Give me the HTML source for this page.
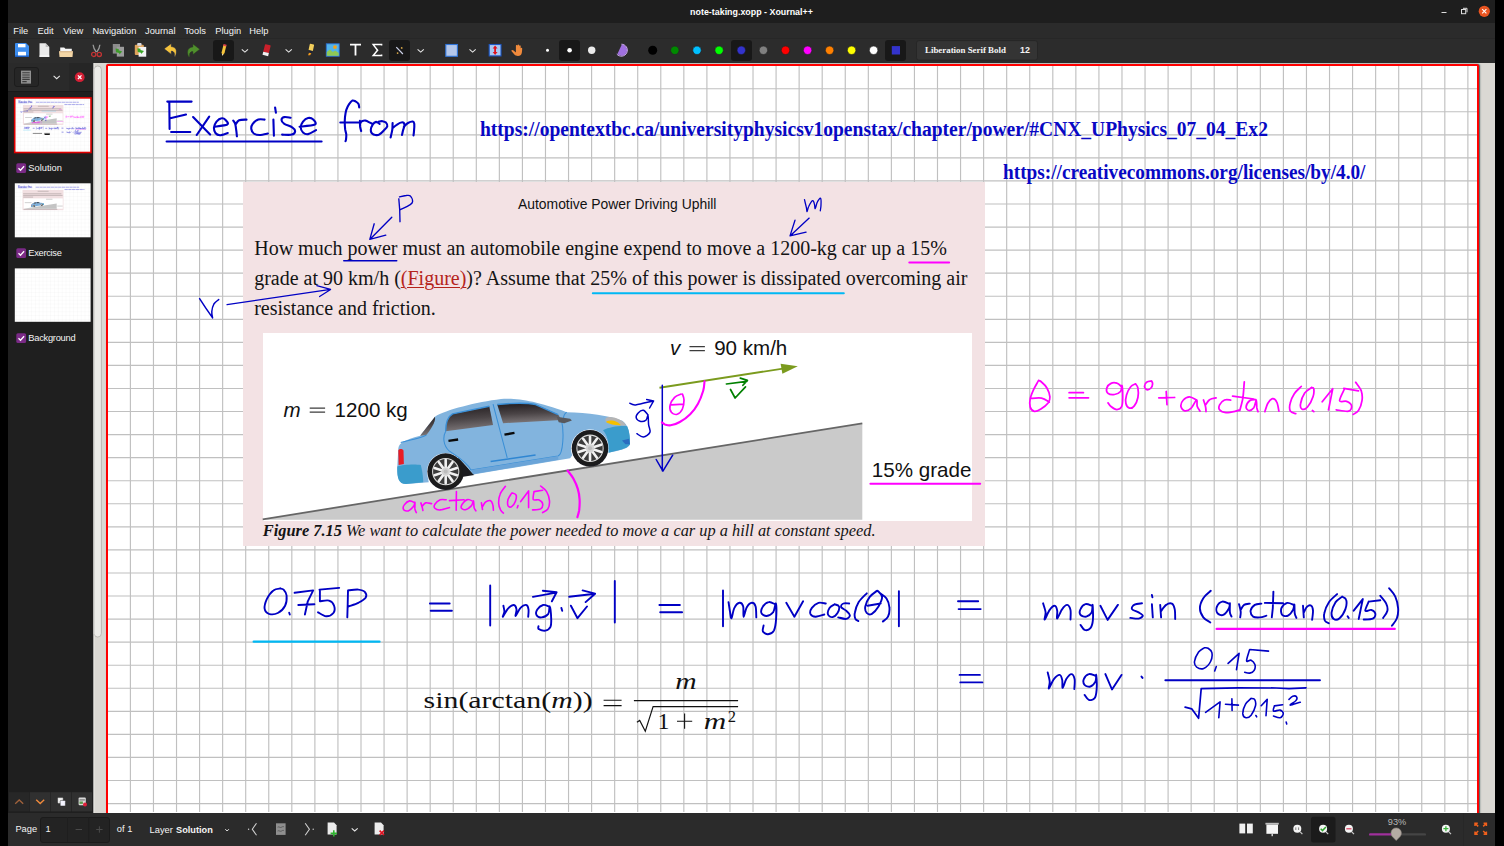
<!DOCTYPE html>
<html><head><meta charset="utf-8"><title>note-taking.xopp - Xournal++</title>
<style>
*{box-sizing:border-box;margin:0;padding:0}
html,body{width:1504px;height:846px;overflow:hidden;background:#000;font-family:"Liberation Sans",sans-serif;position:relative}
.abs{position:absolute}
#title{position:absolute;left:8px;top:0;width:1487px;height:23px;background:#1e1e1e;color:#fff;font-weight:bold;font-size:8.900px;text-align:center;line-height:24px;overflow:hidden}
#menu{position:absolute;left:8px;top:23px;width:1487px;height:15px;background:#2b2b2b;color:#f4f4f4;font-size:9.3px}
#menu span{position:absolute;top:0.700px;line-height:15px;white-space:nowrap}
#tool{position:absolute;left:8px;top:38px;width:1487px;height:25px;background:#2c2c2c;border-top:1px solid #272727}
.ic{position:absolute;overflow:visible}
.sel{position:absolute;background:#181818;border-radius:3px}
#side{position:absolute;left:8px;top:63px;width:85px;height:750px;background:#1f1f1f}
#scr{position:absolute;left:93px;top:63px;width:1402px;height:750px;background:#dad8d3}
#rstrip{position:absolute;left:1479px;top:63px;width:16px;height:749px;background:#d9d7d2}
#bot{position:absolute;left:8px;top:813px;width:1487px;height:33px;background:#2b2b2b}
#page{position:absolute;left:106px;top:64px;width:1373px;height:760px;border:2px solid #f00;background:#fff;border-radius:2px 2px 0 0;box-shadow:1px 0 1.5px rgba(10,50,50,0.75)}
.lbl{position:absolute;color:#f4f4f4;font-size:9.3px;white-space:nowrap}
.url{font-family:"Liberation Serif",serif;font-weight:bold;font-size:20.600px;line-height:22px;color:#0808c4;white-space:nowrap;transform-origin:0 0}
.para{font-family:"Liberation Serif",serif;font-size:20px;line-height:24px;color:#141414;white-space:nowrap}
.cap{font-family:"Liberation Serif",serif;font-style:italic;font-size:16.370px;line-height:20px;color:#141414;white-space:nowrap}
.figl{font-size:20.550px;line-height:24px;color:#111;white-space:nowrap}
.tink path{stroke-width:6.500px;stroke-opacity:0.62}

</style></head><body>
<div id="title">note-taking.xopp - Xournal++</div>
<div id="menu">
<span style="left:5.3px">File</span><span style="left:29.6px">Edit</span><span style="left:55.2px">View</span><span style="left:84.4px">Navigation</span><span style="left:137px">Journal</span><span style="left:176.2px">Tools</span><span style="left:207.3px">Plugin</span><span style="left:241.3px">Help</span>
</div>
<div id="tool"></div>
<!-- window controls -->
<svg class="abs" style="left:1430px;top:0" width="66" height="23" viewBox="0 0 66 23">
<rect x="11.5" y="12" width="5" height="1" fill="#ddd"/>
<rect x="31.5" y="9.5" width="4.2" height="4.2" fill="none" stroke="#ddd" stroke-width="1"/><path d="M33 8.3h4v4" fill="none" stroke="#ddd" stroke-width="1"/>
<circle cx="54.3" cy="11.3" r="5.6" fill="#e95420"/><path d="M52.2 9.2l4.2 4.2M56.4 9.2l-4.2 4.2" stroke="#fff" stroke-width="1.1"/>
</svg>
<!-- toolbar selected backgrounds -->
<div class="sel" style="left:213px;top:40px;width:21px;height:21px"></div>
<div class="sel" style="left:389px;top:40px;width:21px;height:21px"></div>
<div class="sel" style="left:559px;top:40px;width:21px;height:21px"></div>
<div class="sel" style="left:731px;top:40px;width:21px;height:21px"></div>
<div class="sel" style="left:885px;top:40px;width:21px;height:21px"></div>
<svg class="abs" style="left:0;top:36px" width="1504" height="30" viewBox="0 36 1504 30">
<!-- save -->
<g transform="translate(15,43)"><path d="M1 0h10l3 3v10a1 1 0 0 1-1 1H1a1 1 0 0 1-1-1V1a1 1 0 0 1 1-1z" fill="#3d8ef0"/><rect x="0" y="12.5" width="14" height="1.5" fill="#1d5fc2"/><rect x="3" y="1" width="7.5" height="3.3" fill="#fff"/><rect x="3" y="8.8" width="8" height="3.6" fill="#fff"/></g>
<!-- new -->
<g transform="translate(39,43)"><path d="M0.5 0.3h6.2l3.6 3.6v9.8h-9.8z" fill="#e9e9e9"/><path d="M6.7 0.3l3.6 3.6h-3.6z" fill="#bdbdbd"/><rect x="0.5" y="12.6" width="9.8" height="1.2" fill="#fff"/></g>
<!-- open -->
<g transform="translate(59,46.5)"><path d="M1.2 1h4l1.2 1.2h6.4v3h-11.6z" fill="#f6f6f6"/><path d="M0 4.8h14l-0.5 5.7h-13z" fill="#f3d6a6"/><path d="M0 4.8h14v1h-14z" fill="#d7b58a"/></g>
<!-- cut -->
<g transform="translate(90.5,44)"><path d="M2.6 0.8c0.3 3 1.6 5.5 3.2 7.4M9.4 0.8c-0.3 3-1.6 5.5-3.2 7.4" stroke="#9a9a9a" stroke-width="1.3" fill="none"/><circle cx="3.2" cy="10.4" r="2.1" fill="none" stroke="#c33434" stroke-width="1.3"/><circle cx="8.8" cy="10.4" r="2.1" fill="none" stroke="#c33434" stroke-width="1.3"/></g>
<!-- copy -->
<g transform="translate(112,43)"><rect x="0.8" y="1" width="7.2" height="9.6" fill="#8c8c8c"/><rect x="4.8" y="3.8" width="7.2" height="9.8" fill="#9d9d9d"/><path d="M3.6 5.6l3.2 0.4-0.2 1.2 3.6 1.2-2.8 3-0.2-1.4-3.2-0.8z" fill="#3d9a28"/></g>
<!-- paste -->
<g transform="translate(134,42.5)"><rect x="0.8" y="2.2" width="9" height="10.4" rx="1" fill="#dfa45c"/><rect x="3.2" y="0.6" width="4.4" height="2.6" rx="0.8" fill="#d8d8e0"/><rect x="4.6" y="4.4" width="7.6" height="9.8" fill="#f3f3f6"/><path d="M3.4 5.8l3.2 0.4-0.2 1.2 3.6 1.2-2.8 3-0.2-1.4-3.2-0.8z" fill="#3aa526"/></g>
<!-- undo -->
<g transform="translate(163.5,43)"><path d="M7.8 0.4v3.2c4.2 0.2 6.6 3.4 4.2 9.6l-1.3 0.6c0.8-3.6-0.2-5.6-2.9-5.6v3.2l-7.3-5.6z" fill="#f5c33c" stroke="#1a2240" stroke-width="0.6"/></g>
<!-- redo -->
<g transform="translate(185.5,43)"><path d="M7.4 1v3c-4.2 0.2-6.8 3.4-4.4 9.4l1.3 0.4c-0.8-3.4 0.4-5.2 3.1-5.2v3l6.9-5.4z" fill="#4f8f2c" stroke="#2b3a22" stroke-width="0.5"/></g>
<!-- pen -->
<g transform="translate(223.6,50.5) rotate(14)"><path d="M-1.5 -5.5h3v7.6l-1.5 3.2-1.5-3.2z" fill="#f5c33c"/><path d="M-1.5 -6.2h3v1.8h-3z" fill="#e0404a"/><path d="M-0.7 3.8l0.7 1.5 0.7-1.5z" fill="#e9e1d4"/></g>
<!-- chevrons -->
<g fill="none" stroke="#e6e6e6" stroke-width="1.1"><path d="M241.8 49.3l3.1 2.8 3.1-2.8"/><path d="M285.6 49.3l3.1 2.8 3.1-2.8"/><path d="M417.6 49.3l3.1 2.8 3.1-2.8"/><path d="M469.5 49.3l3.1 2.8 3.1-2.8"/></g>
<!-- eraser -->
<g transform="translate(266.6,50.2) rotate(14)"><rect x="-2.9" y="-5.6" width="5.8" height="8" rx="0.6" fill="#c9202b"/><rect x="-2.9" y="2.2" width="5.8" height="3.2" fill="#f1f1f1"/></g>
<!-- highlighter -->
<g transform="translate(310.8,50) rotate(12)"><rect x="-2.2" y="-6" width="4.4" height="6.6" rx="0.6" fill="#f3cf5b"/><path d="M-1.8 0.6h3.6l-0.6 2.4h-2.4z" fill="#1c2238"/><path d="M-1.2 3l-0.4 2.8 2-0.6 0.8-2.2z" fill="#f29a1c"/></g>
<!-- image -->
<g transform="translate(326,43.5)"><rect x="0.3" y="0.3" width="12.9" height="12.4" fill="#52b4ec" stroke="#2b6fd0" stroke-width="0.9"/><path d="M0.8 12.2v-3.6l3.2-2.6 2.8 2.6 2.4-1.6 3.5 2.4v2.8z" fill="#8fc956"/><circle cx="9" cy="3.6" r="1.9" fill="#f5a21b"/></g>
<!-- T -->
<path d="M350 44.6h11M355.5 44.6v11" stroke="#fff" stroke-width="1.8" fill="none"/>
<!-- sigma -->
<path d="M381.6 45.6v-1h-8.4l4.4 5.6-4.4 5.4h8.4v-1" stroke="#fff" stroke-width="1.5" fill="none" stroke-linejoin="miter"/>
<!-- stroke type -->
<path d="M396.3 47.2l6.6 6.8" stroke="#cfd3ea" stroke-width="1.2" fill="none"/><circle cx="401.7" cy="47.9" r="0.9" fill="#d8a748"/><circle cx="397.6" cy="53.1" r="0.9" fill="#d8a748"/>
<!-- blue rect -->
<rect x="445.8" y="44.5" width="11.6" height="11.8" fill="#b4c7ea" stroke="#2f74d8" stroke-width="1.1"/>
<!-- vertical space -->
<rect x="489.2" y="44.5" width="11.8" height="11.4" fill="#a9c8f2" stroke="#1d57c4" stroke-width="1.1"/><path d="M495.1 45.4l2.4 3h-1.5v3.6h1.5l-2.4 3-2.4-3h1.5v-3.6h-1.5z" fill="#e0121c"/>
<!-- hand -->
<path d="M513.6 50.6c-1-1-2.6-0.6-2 0.6l3 3.6c1 1.2 4.6 1.6 6.2 0.2 1.2-1 1.2-3 1.4-6.4 0-1-1.4-1-1.5 0v-2.4c0-1.2-1.5-1.2-1.6 0v-0.8c0-1.2-1.6-1.2-1.6 0v0.4c0-1.2-1.6-1.2-1.6 0.2v6.400z" fill="#f08a3c"/>
<!-- dots -->
<circle cx="547.5" cy="50.3" r="1.5" fill="#fff"/><circle cx="569.6" cy="50.3" r="2.3" fill="#fff"/><circle cx="591.7" cy="50.3" r="3.7" fill="#ececec"/>
<!-- fill icon -->
<path d="M621.8 44.6a5.6 5.6 0 1 1-4.4 9.400z" fill="#a070e0"/><path d="M621.4 44.2a6 6 0 1 1-4.6 9.9" fill="none" stroke="#d9b6ff" stroke-width="0.9"/>
<!-- colours -->
<circle cx="652.7" cy="50.3" r="4.5" fill="#000"/><circle cx="674.8" cy="50.3" r="4.2" fill="#008a00" stroke="#2a1a2a" stroke-width="0.6"/><circle cx="697" cy="50.3" r="4.2" fill="#00c0ff" stroke="#2a1a1a" stroke-width="0.6"/><circle cx="719.1" cy="50.3" r="4.2" fill="#00ff00" stroke="#2a1a2a" stroke-width="0.6"/><circle cx="741.3" cy="50.3" r="4.2" fill="#3333cc" stroke="#1a1a2a" stroke-width="0.6"/><circle cx="763.4" cy="50.3" r="4.2" fill="#808080" stroke="#222" stroke-width="0.6"/><circle cx="785.5" cy="50.3" r="4.2" fill="#ff0000" stroke="#222" stroke-width="0.6"/><circle cx="807.6" cy="50.3" r="4.2" fill="#ff00ff" stroke="#222" stroke-width="0.6"/><circle cx="829.6" cy="50.3" r="4.2" fill="#ff8000" stroke="#222" stroke-width="0.6"/><circle cx="851.6" cy="50.3" r="4.2" fill="#ffff00" stroke="#222" stroke-width="0.6"/><circle cx="873.6" cy="50.3" r="4.2" fill="#ffffff" stroke="#222" stroke-width="0.6"/>
<rect x="891.8" y="46.1" width="8.2" height="8.4" fill="#3333cc"/>
<!-- font button -->
<rect x="916.5" y="40.6" width="121" height="19.6" rx="2.5" fill="#343434" stroke="#262626" stroke-width="1"/>
</svg>
<div class="abs" style="left:925px;top:44px;font-family:'Liberation Serif',serif;font-weight:bold;font-size:8.900px;color:#f4f4f4;line-height:12px;white-space:nowrap">Liberation Serif Bold</div>
<div class="abs" style="left:1020px;top:44px;font-weight:bold;font-size:8.900px;color:#f4f4f4;line-height:12px">12</div>

<div id="scr"></div>
<div id="side"></div>
<div class="abs" style="left:8px;top:63px;width:61px;height:28px;background:#2a2a2a"></div>
<div class="abs" style="left:69px;top:63px;width:24px;height:28px;background:#262626"></div>
<div class="abs" style="left:8px;top:91px;width:85px;height:1px;background:#191919"></div>
<div class="abs" style="left:92.5px;top:63px;width:1px;height:750px;background:#0c0c0c"></div>
<div class="abs" style="left:13.5px;top:67px;width:25px;height:20px;background:#262626;border:1px solid #1c1c1c;border-radius:3px"></div>
<svg class="abs" style="left:0;top:63px" width="106" height="750" viewBox="0 63 106 750">
<rect x="21" y="70.6" width="10" height="13" fill="#909090"/>
<g stroke="#3c3c3c" stroke-width="1.100"><path d="M22.300 72.800h7.400M22.300 75h7.400M22.300 77.200h7.400M22.300 79.400h7.400M22.300 81.600h4.400"/></g>
<path d="M53.6 75.9l3.1 2.8 3.1-2.8" fill="none" stroke="#e6e6e6" stroke-width="1.1"/>
<circle cx="79.7" cy="77.2" r="4.9" fill="#d51f35"/><path d="M77.9 75.4l3.6 3.6M81.500 75.4l-3.600 3.6" stroke="#fff" stroke-width="1.2"/>
<!-- scroll thumb -->
<path d="M94.2 812V69.6a3.600 3.600 0 0 1 7.200 0V812" fill="none"/>
<rect x="94.100" y="66" width="7.300" height="571" rx="3.600" fill="#ecebe8" stroke="#a9a8a3" stroke-width="0.7"/>
<rect x="93.300" y="63" width="1" height="750" fill="#f1f0ed"/>
<!-- layer thumbs -->
<rect x="14.700" y="97.900" width="76.300" height="54.600" fill="#fff" stroke="#e00000" stroke-width="1.600"/>
<rect x="14.800" y="183.300" width="75.800" height="54" fill="#fff"/>
<rect x="14.800" y="268.400" width="75.800" height="53.400" fill="#fff"/>
<!-- checkboxes -->
<g id="cb"><rect x="16.300" y="163.200" width="9.800" height="9.800" rx="1.600" fill="#7a2a86"/><path d="M18.500 168.200l2 2 3.600-4" fill="none" stroke="#fff" stroke-width="1.300"/></g>
<use href="#cb" y="85"/><use href="#cb" y="170"/>
<!-- bottom buttons -->
<rect x="8.800" y="792.200" width="20.800" height="19.200" fill="#272727"/><rect x="30" y="792.200" width="20.400" height="19.200" fill="#303030"/><rect x="50.800" y="792.200" width="20.400" height="19.200" fill="#303030"/><rect x="71.700" y="792.200" width="20.400" height="19.200" fill="#303030"/>
<path d="M15.200 803.800l4-3.800 4 3.800" fill="none" stroke="#a0623c" stroke-width="1.300"/>
<path d="M36.200 799.800l4 3.800 4-3.800" fill="none" stroke="#f08a3c" stroke-width="1.400"/>
<rect x="57.600" y="797.600" width="5.600" height="5.800" rx="0.800" fill="#f4f4f4" stroke="#2a2a2a" stroke-width="0.500"/><rect x="60.200" y="800.400" width="5.200" height="5.600" rx="0.800" fill="#f4f4ff" stroke="#2a2a2a" stroke-width="0.500"/>
<rect x="78.600" y="797.600" width="7.200" height="7.600" rx="1" fill="#d9d9d9"/><rect x="79.500" y="799.300" width="5.400" height="1.200" fill="#777"/><rect x="79.500" y="801.500" width="3.400" height="2.400" fill="#5a9a4a"/><circle cx="85" cy="804.600" r="2" fill="#e0203a"/>
</svg>
<div class="lbl" style="left:28.300px;top:162px;line-height:12px">Solution</div>
<div class="lbl" style="left:28.300px;top:247px;line-height:12px;letter-spacing:-0.300px">Exercise</div>
<div class="lbl" style="left:28.300px;top:332px;line-height:12px;letter-spacing:-0.260px">Background</div>
<svg class="abs" style="left:0;top:90px" width="100" height="240" viewBox="0 90 100 240"><defs><clipPath id="t1"><rect x="15.5" y="98.7" width="74.7" height="53"/></clipPath><clipPath id="t2"><rect x="14.800" y="183.300" width="75.800" height="54"/></clipPath><clipPath id="t3"><rect x="14.800" y="268.400" width="75.800" height="53.400"/></clipPath></defs><g clip-path="url(#t1)"><g transform="translate(15.50,98.70) scale(0.05450) translate(-107,-65)"><path d="M130.4 66V1035M199.6 66V1035M268.8 66V1035M337.9 66V1035M407.1 66V1035M476.3 66V1035M545.5 66V1035M614.7 66V1035M683.8 66V1035M753.0 66V1035M822.2 66V1035M891.4 66V1035M960.6 66V1035M1029.7 66V1035M1098.9 66V1035M1168.1 66V1035M1237.3 66V1035M1306.5 66V1035M1375.6 66V1035M1444.8 66V1035M108 88.7H1477M108 157.9H1477M108 227.1H1477M108 296.2H1477M108 365.4H1477M108 434.6H1477M108 503.8H1477M108 573.0H1477M108 642.1H1477M108 711.3H1477M108 780.5H1477M108 849.7H1477M108 918.9H1477M108 988.0H1477" stroke="#000" stroke-opacity="0.028" stroke-width="14" fill="none"/><rect x="243" y="181.5" width="742" height="364.5" fill="#f1dfe1"/><rect x="262.6" y="332.7" width="709.3" height="188" fill="#fff"/><path d="M262.7 519.700L862.3 423.400V519.700z" fill="#c4c4c4"/><use href="#car"/><g stroke="#222" stroke-opacity="0.55" stroke-width="7"><path d="M255 249h692M255 279h714M255 309h180M518 204h198M263 532h610" /></g><g stroke="#111" stroke-opacity="0.5" stroke-width="7"><path d="M284 410h122M670 349h116M872 472h98"/></g><g stroke="#0000c4" stroke-opacity="0.75" stroke-width="8"><path d="M481 130h788M1004 173h362" stroke-dasharray="60 8"/></g><g class="tink" fill="none" stroke-linecap="round"><path stroke="#0000c4" stroke-width="2.10" d="M167.3 101.6L191.6 101.6M169.3 102.2L169.6 129.0M170.2 118.3L186.0 114.6M171.1 132.0L190.3 132.0M193.1 117.1L210.1 134.6M209.2 116.6L196.7 135.0M214.3 126.7C216.4 126.4 225.4 125.6 227.3 124.5C229.1 123.3 226.5 121.0 225.6 120.0C224.6 118.9 223.1 118.0 221.6 118.3C220.1 118.5 217.8 120.1 216.5 121.6C215.3 123.2 214.2 125.4 214.0 127.3C213.8 129.2 214.4 131.6 215.4 133.0C216.4 134.3 217.8 135.2 219.9 135.2C222.0 135.2 226.5 133.3 227.8 133.0M233.2 120.5C233.6 121.1 234.7 122.2 235.2 123.9C235.7 125.6 236.0 128.6 236.3 130.7C236.6 132.8 236.8 135.4 236.9 136.3M235.5 124.5C236.1 123.8 237.3 121.1 239.1 120.3C241.0 119.5 245.2 119.7 246.5 119.6M264.6 119.6C263.5 119.6 260.3 118.9 258.3 119.6C256.4 120.3 253.9 122.3 252.7 123.9C251.5 125.5 251.1 127.4 251.3 129.0C251.5 130.6 252.5 132.5 253.8 133.5C255.2 134.5 257.1 135.0 259.5 135.0C261.8 135.0 266.5 133.8 267.9 133.5M273.4 119.6L273.9 135.8M275.1 107.5L275.9 112.6M290.6 117.7C289.5 117.6 285.8 116.8 284.3 117.1C282.8 117.5 281.5 118.8 281.5 120.0C281.5 121.1 282.5 122.7 284.3 123.9C286.1 125.1 290.5 126.1 292.2 127.3C294.0 128.5 295.2 130.0 295.1 131.3C295.0 132.5 293.8 134.1 291.7 134.6C289.5 135.2 283.7 134.6 282.1 134.6M299.6 126.7C302.1 126.4 312.6 125.7 314.9 124.5C317.1 123.3 314.3 120.5 313.2 119.4C312.0 118.3 309.8 117.7 308.1 118.0C306.4 118.4 304.2 120.1 303.0 121.6C301.8 123.2 300.7 125.5 300.7 127.3C300.7 129.1 301.8 131.3 303.0 132.4C304.2 133.5 305.9 134.5 308.1 134.1C310.2 133.7 314.7 130.8 316.0 130.1M166.6 141.5L321.6 141.5"/>
<path stroke="#0000c4" stroke-width="2.10" d="M359.2 107.4C359.1 106.8 359.0 104.8 358.4 103.8C357.8 102.8 356.5 101.9 355.5 101.3C354.5 100.8 353.4 100.2 352.3 100.6C351.3 101.1 350.2 102.6 349.1 104.2C348.1 105.7 347.0 107.7 346.3 109.9C345.6 112.0 345.3 114.6 345.0 117.0C344.8 119.3 344.7 121.9 344.8 124.0C344.8 126.2 345.0 127.9 345.2 129.7C345.5 131.5 346.2 133.0 346.3 134.7C346.4 136.3 346.1 138.6 346.0 139.6C345.8 140.7 345.5 140.9 345.5 141.2M340.3 122.5L358.4 122.5M359.9 120.9C360.0 121.9 359.9 125.2 360.1 126.9C360.4 128.6 361.0 130.4 361.2 131.1M360.1 123.3C360.4 123.0 361.0 121.7 361.9 121.2C362.8 120.8 364.2 120.4 365.5 120.6C366.8 120.9 368.5 121.9 369.7 122.5C370.9 123.0 372.1 123.7 372.6 123.9M379.6 123.9C379.1 123.6 377.3 121.8 376.1 121.9C374.9 122.1 373.4 123.5 372.6 124.8C371.7 126.1 370.9 128.3 370.8 129.7C370.7 131.1 371.1 132.4 371.8 133.3C372.6 134.1 374.1 134.9 375.4 135.0C376.7 135.2 378.2 135.1 379.6 134.3C381.1 133.6 382.6 131.8 383.9 130.4C385.2 129.1 387.0 127.5 387.3 126.2C387.7 124.9 386.8 123.5 386.0 122.6C385.2 121.8 383.7 121.4 382.5 121.2C381.3 121.0 379.5 121.5 378.9 121.6M392.6 123.0C392.5 124.1 392.6 127.3 392.3 129.7C392.0 132.1 390.9 136.2 390.6 137.5M392.4 128.3C393.1 127.7 395.0 125.8 396.7 124.8C398.3 123.7 401.0 122.3 402.3 122.3C403.6 122.3 404.3 123.4 404.5 124.8C404.6 126.1 403.5 128.7 403.0 130.4C402.6 132.1 402.2 134.3 402.0 135.0M403.8 126.9C404.5 126.2 406.5 123.9 408.0 123.0C409.6 122.1 411.9 121.4 413.0 121.6C414.0 121.7 414.1 122.4 414.3 124.0C414.4 125.6 414.2 129.2 414.0 131.1C413.9 133.0 413.6 134.7 413.5 135.4"/></g><g class="tink" fill="none" stroke-linecap="round"><path stroke="#0000c4" stroke-width="1.35" d="M398.8 198.8L399.7 209.6L400.0 221.7M399.5 196.9C400.6 196.6 404.4 195.6 406.2 195.5C408.0 195.3 409.3 194.9 410.4 195.9C411.5 196.9 412.7 200.1 412.6 201.6C412.5 203.1 412.0 203.6 409.9 204.9C407.9 206.2 402.1 208.8 400.5 209.6M391.8 217.2L369.8 239.4M374.2 223.8L369.8 239.4L385.8 235.1"/>
<path stroke="#0000c4" stroke-width="1.60" d="M343.8 260.7L396.7 260.7"/>
<path stroke="#0000c4" stroke-width="1.30" d="M804.5 199.7C804.8 201.0 806.0 205.8 806.4 207.7C806.8 209.7 806.7 211.8 807.1 211.5C807.4 211.3 807.8 208.1 808.8 206.3C809.7 204.5 811.6 201.0 812.5 200.7C813.5 200.3 814.0 202.6 814.4 204.0C814.9 205.3 814.7 209.0 815.2 208.7C815.7 208.4 816.4 203.8 817.3 202.1C818.2 200.3 819.9 197.8 820.6 198.3C821.2 198.8 821.1 202.8 821.0 204.9C821.0 207.0 820.4 209.8 820.3 210.8M809.2 218.1L790.0 235.9M795.0 220.2L790.0 235.9L806.1 232.1"/>
<path stroke="#0000c4" stroke-width="1.50" d="M199.6 298.7L206.0 308.3L212.6 317.9M212.6 317.9C212.4 316.8 211.6 313.8 211.8 311.5C212.0 309.2 212.8 306.0 213.9 304.0C215.1 302.1 217.9 300.3 218.7 299.6"/>
<path stroke="#0000c4" stroke-width="1.20" d="M227.0 304.7L330.6 289.4M316.8 285.7L330.6 289.4L319.6 296.6"/>
<path stroke="#ff00ff" stroke-width="2.00" d="M909.3 262.6L949.1 262.6"/>
<path stroke="#00b8f4" stroke-width="2.00" d="M592.8 293.2L843.8 293.2"/>
<path stroke="#ff00ff" stroke-width="2.00" d="M870.4 483.8L980.2 483.8"/>
<path stroke="#0000c4" stroke-width="1.50" d="M662.3 385.3L662.3 470.8M656.2 459.5L662.9 471.2L672.7 455.2M629.8 403.2C630.7 403.4 631.8 405.2 635.6 404.9C639.4 404.5 649.7 401.8 652.5 401.2M646.7 399.6L653.6 400.9L649.6 408.0M648.0 414.9C647.2 414.1 645.0 410.6 643.4 410.3C641.8 410.0 639.4 411.6 638.2 412.9C637.0 414.2 635.8 416.7 636.3 418.1C636.7 419.5 639.2 421.0 640.8 421.4C642.4 421.7 644.8 421.0 646.0 420.1C647.2 419.1 647.5 414.8 648.0 415.5C648.4 416.3 648.3 421.8 648.6 424.6C648.9 427.4 650.8 430.4 649.9 432.4C649.0 434.5 645.6 436.8 643.4 437.0C641.2 437.2 638.0 434.3 636.9 433.7"/>
<path stroke="#ff00ff" stroke-width="1.70" d="M681.1 394.1C680.0 394.6 676.5 395.5 674.6 397.3C672.8 399.2 670.6 402.6 670.1 405.1C669.5 407.6 670.2 410.7 671.4 412.3C672.6 413.8 675.4 414.8 677.2 414.2C679.1 413.7 681.3 411.4 682.4 409.0C683.5 406.6 684.0 402.4 684.0 399.9C684.0 397.4 682.7 395.0 682.4 394.1M671.4 404.9L683.7 404.1"/>
<path stroke="#ff00ff" stroke-width="2.10" d="M704.5 381.4C704.3 383.0 704.3 387.1 703.2 390.8C702.1 394.5 700.2 399.9 698.0 403.8C695.9 407.7 693.3 411.2 690.2 414.2C687.2 417.2 683.1 420.2 679.8 422.0C676.6 423.9 673.2 424.9 670.7 425.3C668.2 425.7 666.3 424.8 664.9 424.4C663.4 423.9 662.4 422.7 661.9 422.4"/>
<path stroke="#008000" stroke-width="1.70" d="M726.4 384.0L746.8 381.4M740.3 378.1L747.4 380.4L742.9 385.3M730.5 389.5L735.1 398.0L745.5 386.9"/>
<path stroke="#ff00ff" stroke-width="1.60" d="M414.9 502.9C414.1 502.6 411.4 500.6 409.6 500.9C407.9 501.2 405.3 503.5 404.3 504.9C403.3 506.3 403.0 508.6 403.6 509.5C404.3 510.5 406.6 511.4 408.3 510.9C410.0 510.3 412.5 507.7 413.6 506.2C414.7 504.8 414.7 501.8 414.9 502.2C415.2 502.7 414.7 507.2 414.9 508.9C415.2 510.6 416.1 512.0 416.3 512.6M420.9 502.9C421.2 503.7 421.9 506.3 422.3 507.6C422.6 508.8 422.8 510.0 422.9 510.5M422.3 506.2C422.8 505.7 424.0 503.3 425.6 502.9C427.1 502.5 430.6 503.5 431.6 503.6M446.2 499.8C445.2 499.8 442.1 499.1 440.2 499.8C438.3 500.6 435.8 502.8 434.9 504.2C434.0 505.6 434.0 507.3 434.9 508.2C435.8 509.2 437.8 510.1 440.2 509.9C442.7 509.8 448.0 508.0 449.5 507.6M456.4 491.6L456.2 510.2M449.5 500.6L464.1 499.8M473.5 501.6C472.5 501.2 469.4 499.1 467.5 499.6C465.6 500.0 463.2 502.8 462.2 504.2C461.2 505.7 460.8 507.3 461.5 508.2C462.2 509.1 464.5 510.0 466.1 509.5C467.8 509.1 470.2 507.0 471.5 505.6C472.7 504.1 473.0 500.6 473.5 500.9C473.9 501.2 473.7 505.9 474.1 507.6C474.5 509.2 475.6 510.3 475.9 510.9M481.4 502.9L482.5 509.5M482.1 507.6C482.7 506.7 484.1 503.4 485.4 502.2C486.8 501.1 488.9 500.3 490.1 500.6C491.3 501.0 492.2 502.6 492.7 504.2C493.3 505.8 493.3 509.2 493.4 510.2M505.4 486.3C504.5 487.6 501.2 491.4 500.1 494.3C498.9 497.1 498.6 500.9 498.7 503.6C498.8 506.2 499.9 508.6 500.7 510.2C501.5 511.8 502.9 512.7 503.4 513.1M511.4 493.6C510.8 494.6 508.6 497.6 508.0 499.6C507.5 501.6 507.5 504.3 508.0 505.6C508.6 506.8 510.1 507.6 511.4 506.9C512.6 506.2 514.6 503.6 515.3 501.6C516.1 499.6 516.6 496.4 516.0 494.9C515.5 493.5 512.7 493.3 512.0 492.9M518.0 505.6L517.3 507.8M520.7 501.6L528.6 490.9L528.6 507.6M534.0 491.6L542.6 490.3M534.0 491.6C533.9 492.9 532.5 498.2 533.3 499.6C534.1 500.9 537.1 499.2 538.6 499.8C540.2 500.5 542.3 502.1 542.6 503.6C542.9 505.1 542.3 507.8 540.6 508.9C538.9 509.9 534.0 509.8 532.6 509.9M540.6 486.0C541.6 486.9 545.1 489.1 546.6 491.6C548.1 494.1 549.3 498.0 549.5 500.9C549.7 503.8 549.1 506.9 547.9 508.9C546.8 510.8 543.5 512.0 542.6 512.6"/>
<path stroke="#ff00ff" stroke-width="2.20" d="M567.6 470.6C568.5 471.9 571.5 475.2 573.2 478.3C574.9 481.4 576.8 485.4 577.8 488.9C578.9 492.5 579.4 496.0 579.6 499.6C579.8 503.1 579.5 507.3 579.2 510.2C578.8 513.1 577.7 516.0 577.4 517.1"/>
<path stroke="#ff00ff" stroke-width="1.75" d="M1038.5 380.5C1037.8 382.0 1035.2 386.1 1033.8 389.1C1032.4 392.2 1030.8 395.7 1030.2 398.7C1029.6 401.7 1029.5 405.0 1030.2 407.1C1030.9 409.2 1032.6 411.0 1034.4 411.3C1036.2 411.6 1038.6 410.3 1040.9 408.9C1043.2 407.5 1046.6 404.9 1048.1 402.9C1049.6 400.9 1050.1 399.4 1049.9 396.9C1049.7 394.4 1048.3 390.4 1046.9 388.0C1045.5 385.5 1042.9 383.2 1041.5 382.0C1040.1 380.7 1039.0 380.8 1038.5 380.5M1030.2 398.5C1032.1 398.4 1038.4 397.5 1041.5 398.1C1044.7 398.7 1048.0 401.4 1049.3 402.1M1069.1 392.7L1083.4 392.7M1069.1 397.8L1088.5 397.8M1121.7 386.8C1120.9 386.2 1118.7 383.7 1116.9 383.2C1115.1 382.6 1112.6 382.6 1111.0 383.4C1109.3 384.2 1107.3 386.3 1106.8 388.0C1106.3 389.6 1106.7 392.2 1108.0 393.3C1109.3 394.4 1112.4 394.8 1114.5 394.5C1116.6 394.2 1119.3 393.0 1120.5 391.5C1121.8 390.0 1121.6 384.6 1122.0 385.6C1122.3 386.6 1122.7 394.0 1122.7 397.5C1122.6 401.0 1122.7 404.5 1121.7 406.5C1120.8 408.5 1118.7 409.5 1116.9 409.5C1115.1 409.5 1112.4 407.6 1111.0 406.5C1109.5 405.4 1108.5 403.5 1108.0 402.9M1135.5 383.8C1134.7 384.3 1132.2 384.9 1130.7 386.8C1129.2 388.6 1127.3 392.3 1126.5 395.1C1125.7 397.9 1125.4 401.4 1125.9 403.5C1126.4 405.7 1128.1 407.7 1129.5 408.1C1130.9 408.5 1132.9 407.7 1134.3 405.9C1135.7 404.1 1137.3 400.5 1137.9 397.5C1138.5 394.5 1138.3 390.2 1137.9 388.0C1137.5 385.7 1135.9 384.5 1135.5 383.8M1151.6 381.0C1150.8 381.2 1148.1 381.1 1146.9 382.0C1145.7 382.8 1144.5 384.9 1144.5 386.2C1144.5 387.5 1145.8 389.4 1146.9 389.7C1148.0 390.0 1150.1 388.9 1151.0 388.0C1152.0 387.0 1152.5 384.9 1152.6 383.8C1152.7 382.6 1151.8 381.5 1151.6 381.0M1158.8 397.8L1174.6 397.5M1166.2 391.5L1167.0 404.7"/>
<path stroke="#ff00ff" stroke-width="1.75" d="M1196.5 400.0C1195.4 399.5 1191.8 396.8 1189.5 396.8C1187.3 396.8 1184.7 398.4 1183.3 400.0C1181.8 401.6 1180.7 404.5 1180.9 406.3C1181.1 408.1 1183.0 410.4 1184.7 410.8C1186.3 411.1 1189.0 410.2 1190.9 408.4C1192.9 406.6 1195.5 400.4 1196.5 400.0C1197.6 399.7 1196.6 404.4 1197.2 406.3C1197.8 408.2 1199.6 410.4 1200.0 411.2M1203.5 400.0C1203.9 401.2 1205.2 405.1 1205.6 407.0C1206.0 408.9 1206.0 410.8 1206.0 411.6M1205.6 404.9C1206.3 404.0 1208.0 400.8 1209.8 399.6C1211.5 398.4 1215.0 398.2 1216.1 397.9M1230.7 400.0C1229.7 400.0 1226.3 399.2 1224.5 400.0C1222.6 400.8 1220.4 403.3 1219.6 404.9C1218.8 406.5 1218.5 408.5 1219.6 409.8C1220.6 411.1 1223.2 412.4 1225.9 412.6C1228.5 412.8 1233.3 411.7 1235.6 411.2C1238.0 410.7 1239.1 410.0 1239.8 409.8M1244.3 381.9C1244.0 384.5 1243.6 393.2 1242.9 397.9C1242.1 402.7 1240.3 408.4 1239.8 410.5M1232.6 396.2L1253.8 399.0M1255.9 399.6C1254.8 399.8 1251.2 399.5 1249.6 400.7C1248.0 402.0 1246.2 405.4 1246.1 407.0C1246.0 408.6 1247.6 410.4 1248.9 410.5C1250.2 410.6 1252.5 409.4 1253.8 407.7C1255.0 406.0 1255.8 400.0 1256.3 400.0C1256.8 400.0 1256.6 405.8 1256.8 407.7C1257.1 409.6 1257.8 411.0 1258.0 411.6M1264.9 411.6C1265.4 410.3 1266.5 405.7 1267.7 403.5C1269.0 401.3 1271.1 398.9 1272.6 398.6C1274.1 398.4 1275.8 400.0 1276.8 402.1C1277.9 404.2 1278.6 409.7 1278.9 411.2M1301.2 386.5C1300.1 387.7 1296.1 390.9 1294.3 393.7C1292.4 396.6 1290.7 400.6 1290.1 403.5C1289.4 406.4 1289.4 409.5 1290.4 411.2C1291.3 412.9 1294.8 413.2 1295.7 413.6M1311.7 387.5C1310.6 388.4 1306.6 390.4 1304.7 393.0C1302.9 395.7 1301.0 400.8 1300.6 403.5C1300.1 406.2 1300.8 408.5 1301.9 409.1C1303.1 409.7 1305.7 409.1 1307.5 407.0C1309.4 404.9 1312.1 399.6 1313.1 396.5C1314.2 393.5 1314.0 390.4 1313.8 388.8C1313.6 387.3 1312.1 387.7 1311.7 387.5M1312.4 410.5L1313.8 411.6M1322.2 401.8L1332.7 388.8L1328.5 409.8M1358.5 390.9L1343.8 388.4M1344.5 388.8C1343.7 390.8 1339.3 398.6 1339.6 400.7C1340.0 402.8 1344.6 400.6 1346.6 401.4C1348.6 402.2 1351.2 404.0 1351.5 405.6C1351.9 407.2 1351.3 410.5 1348.7 411.2C1346.2 411.9 1338.2 410.0 1336.2 409.8M1355.7 382.3C1356.6 383.7 1360.2 387.9 1361.3 390.9C1362.3 394.0 1362.5 397.5 1362.0 400.7C1361.5 404.0 1360.0 408.2 1358.5 410.5C1357.0 412.8 1354.1 413.7 1353.2 414.4"/>
<path stroke="#0000c4" stroke-width="1.90" d="M280.7 588.5C279.5 588.8 275.7 588.6 273.4 590.4C271.1 592.1 268.3 596.1 266.8 599.1C265.4 602.2 264.3 606.2 264.6 608.6C265.0 611.1 266.8 613.0 269.0 613.8C271.2 614.5 275.1 614.4 277.8 613.0C280.5 611.7 283.6 608.6 285.1 605.7C286.6 602.8 286.8 598.2 286.6 595.5C286.3 592.8 284.7 590.8 283.6 589.6C282.5 588.5 280.6 588.7 280.0 588.5M289.2 612.7L289.8 614.5M294.6 592.8L313.2 590.4L307.8 601.3L304.9 614.5M298.3 605.0L314.4 604.3M339.2 587.9L319.5 589.6M319.9 589.6L319.9 601.3M319.9 601.3C321.4 601.2 326.6 599.9 329.0 600.6C331.4 601.3 333.4 603.6 334.1 605.7C334.8 607.8 334.7 611.3 333.4 613.0C332.0 614.8 328.6 616.4 326.1 616.3C323.5 616.1 319.4 613.0 318.0 612.3M348.0 590.4L347.7 604.3L347.3 617.4M348.3 590.4C350.0 590.2 355.5 589.4 358.3 589.6C361.0 589.9 363.6 590.5 364.8 591.8C366.1 593.2 366.7 595.8 365.6 597.7C364.5 599.5 361.1 601.3 358.3 602.8C355.4 604.3 350.0 605.8 348.3 606.5M429.9 603.5L449.7 603.5M430.7 610.8L451.9 610.8"/>
<path stroke="#00b8f4" stroke-width="2.30" d="M253.7 641.7L379.5 641.7"/>
<path stroke="#0000c4" stroke-width="1.90" d="M490.2 585.5L490.2 625.5M503.4 605.7C503.5 606.7 504.4 609.7 504.4 611.6C504.3 613.4 502.3 617.2 502.9 616.7C503.5 616.2 506.2 610.6 508.0 608.6C509.9 606.7 512.5 604.9 513.9 605.0C515.3 605.1 516.2 607.5 516.5 609.4C516.8 611.2 515.0 616.2 515.6 616.0C516.3 615.7 518.7 609.7 520.5 607.9C522.2 606.1 525.0 604.7 526.3 605.0C527.7 605.2 528.2 607.4 528.5 609.4C528.8 611.3 528.3 615.5 528.2 616.7M532.9 596.9L556.3 592.6M542.8 590.8L556.6 592.3L551.9 601.3M549.0 606.5C548.0 606.2 545.1 604.5 543.1 605.0C541.2 605.5 538.4 607.7 537.3 609.4C536.2 611.1 535.8 613.9 536.6 615.2C537.3 616.6 539.7 617.7 541.7 617.4C543.6 617.2 546.9 615.6 548.3 613.8C549.6 611.9 549.2 605.6 549.7 606.5C550.2 607.3 551.1 615.5 551.2 618.9C551.3 622.3 551.4 625.0 550.5 626.9C549.5 628.9 547.3 630.2 545.3 630.6C543.4 631.0 539.9 629.9 538.8 629.1C537.6 628.4 538.5 626.7 538.5 626.2M561.4 607.9L562.2 610.8M569.2 596.7L595.1 593.7M582.6 590.4L595.1 593.7L585.6 602.1M570.9 605.7L577.5 618.2L587.0 606.5M614.8 580.9L614.8 622.5M659.4 605.0L679.9 605.0M660.2 612.3L682.1 612.3"/>
<path stroke="#0000c4" stroke-width="1.90" d="M723.0 590.4L723.0 626.2M728.5 602.1C728.8 603.6 729.5 608.9 730.0 611.6C730.5 614.3 730.7 618.8 731.5 618.2C732.2 617.5 733.0 610.5 734.4 607.9C735.7 605.4 738.0 603.0 739.5 602.8C741.0 602.6 742.5 604.1 743.2 606.5C743.8 608.8 743.0 616.6 743.6 616.7C744.2 616.8 745.4 609.5 746.8 607.2C748.2 604.9 750.5 602.9 751.9 602.8C753.4 602.7 754.9 604.0 755.6 606.5C756.3 608.9 756.2 615.6 756.3 617.4M775.3 604.3C774.2 603.9 770.8 601.7 768.8 602.1C766.7 602.4 764.1 604.6 762.9 606.5C761.7 608.3 760.8 611.4 761.4 613.0C762.0 614.6 764.6 616.1 766.6 616.0C768.5 615.8 771.6 614.4 773.1 612.3C774.7 610.2 775.3 602.4 775.8 603.5C776.3 604.6 776.4 614.4 776.1 618.9C775.8 623.4 775.2 628.0 773.9 630.6C772.5 633.1 769.9 634.1 768.0 634.2C766.2 634.4 763.6 632.8 762.9 631.3C762.2 629.9 763.5 626.4 763.6 625.5M786.3 602.8L794.4 616.7L803.1 601.3M825.8 603.5C824.6 603.4 820.8 602.1 818.5 602.8C816.2 603.5 813.2 606.1 811.9 607.9C810.6 609.7 809.8 612.3 810.4 613.8C811.1 615.2 813.2 616.6 815.6 616.7C817.9 616.8 822.9 614.9 824.3 614.5M834.6 604.3C833.7 604.9 830.6 606.2 829.5 607.9C828.4 609.6 827.5 613.0 828.0 614.5C828.5 616.0 830.8 617.4 832.4 617.1C834.0 616.9 836.4 614.8 837.5 613.0C838.6 611.3 839.5 607.9 839.0 606.5C838.5 605.0 835.3 604.6 834.6 604.3M849.2 603.5C848.2 603.5 844.7 602.9 843.4 603.5C842.0 604.1 840.7 606.0 841.2 607.2C841.7 608.4 844.8 609.5 846.3 610.8C847.7 612.2 849.9 613.9 849.9 615.2C849.9 616.6 848.2 618.5 846.3 618.9C844.3 619.3 839.6 617.7 838.2 617.4M866.8 593.3C865.4 594.7 860.7 598.8 858.7 602.1C856.7 605.4 855.3 610.2 854.8 613.0C854.2 615.8 854.8 617.5 855.4 618.9C855.9 620.2 857.8 620.7 858.3 621.1M877.0 590.8C875.8 591.8 871.6 594.3 869.7 596.9C867.7 599.6 865.8 603.8 865.3 606.5C864.8 609.1 865.7 611.8 866.8 613.0C867.9 614.3 869.9 614.9 871.9 613.8C873.8 612.7 876.8 609.3 878.5 606.5C880.2 603.6 882.2 599.6 882.1 596.9C882.0 594.3 878.5 591.8 877.7 590.8M867.5 605.7L880.7 603.5M880.2 593.3C881.3 594.1 885.0 596.1 886.5 598.4C888.0 600.7 889.2 604.1 889.4 607.2C889.7 610.2 889.1 614.3 888.0 616.7C886.9 619.1 883.7 620.7 882.9 621.5M898.9 591.1L898.9 626.2"/>
<path stroke="#0000c4" stroke-width="1.90" d="M958.0 601.3L978.2 601.3M958.6 609.1L980.7 609.1M1043.1 603.3C1043.5 604.8 1045.3 609.7 1045.6 612.4C1045.8 615.1 1044.0 620.0 1044.7 619.5C1045.4 619.1 1048.0 612.2 1049.7 609.9C1051.4 607.6 1053.4 605.6 1054.7 605.8C1055.9 605.9 1056.8 608.6 1057.2 610.7C1057.6 612.9 1056.4 618.8 1057.2 618.6C1058.0 618.3 1060.5 611.3 1062.2 609.1C1063.8 606.8 1065.8 604.8 1067.2 604.9C1068.5 605.1 1069.9 607.5 1070.5 609.9C1071.0 612.3 1070.5 617.9 1070.5 619.5M1092.1 605.8C1091.0 605.5 1087.4 603.5 1085.4 604.1C1083.5 604.6 1081.3 607.3 1080.5 609.1C1079.6 610.9 1079.5 613.6 1080.5 614.9C1081.4 616.1 1084.4 617.0 1086.3 616.6C1088.1 616.1 1090.5 614.3 1091.6 612.4C1092.6 610.5 1092.4 603.7 1092.6 604.9C1092.8 606.2 1093.3 616.0 1092.9 619.9C1092.6 623.8 1091.8 626.5 1090.4 628.2C1089.0 629.9 1086.3 630.4 1084.6 629.9C1083.0 629.3 1081.2 625.7 1080.5 624.9M1100.4 605.8L1107.6 619.9L1117.9 604.9M1142.0 603.3C1140.7 603.5 1136.1 603.6 1134.5 604.6C1132.8 605.6 1131.3 607.8 1132.0 609.1C1132.7 610.4 1136.8 611.3 1138.6 612.4C1140.4 613.5 1142.8 614.7 1142.8 615.7C1142.8 616.7 1140.7 618.2 1138.6 618.6C1136.6 618.9 1131.7 618.0 1130.3 617.9M1151.9 604.1L1152.8 617.4M1151.9 594.9L1152.4 597.4M1160.2 604.9L1161.1 617.4M1160.7 611.6C1161.6 610.5 1164.2 606.2 1166.1 604.9C1167.9 603.6 1170.4 602.9 1171.9 603.6C1173.3 604.3 1174.2 606.5 1174.7 609.1C1175.3 611.7 1175.1 617.4 1175.2 619.0"/>
<path stroke="#0000c4" stroke-width="1.90" d="M1210.8 590.8C1209.5 592.0 1205.1 595.4 1203.3 598.3C1201.5 601.2 1199.9 605.1 1199.9 608.2C1199.9 611.4 1201.6 615.0 1203.3 617.4C1205.0 619.7 1209.1 621.5 1210.3 622.4M1229.9 604.1C1228.6 603.7 1224.5 601.2 1222.4 601.6C1220.2 602.0 1217.7 604.6 1216.9 606.6C1216.1 608.5 1216.3 611.8 1217.4 613.2C1218.5 614.6 1221.3 615.7 1223.2 614.9C1225.2 614.1 1227.9 610.2 1229.0 608.2C1230.1 606.3 1229.7 602.6 1229.9 603.3C1230.0 604.0 1229.6 610.2 1229.9 612.4C1230.1 614.6 1231.3 615.9 1231.5 616.6M1239.0 604.1C1239.3 605.3 1240.5 609.4 1240.7 611.6C1240.9 613.8 1240.3 616.4 1240.2 617.4M1240.7 609.9C1241.2 609.1 1242.5 606.0 1244.0 604.9C1245.5 603.9 1248.8 603.8 1249.8 603.6M1261.4 603.6C1260.3 603.8 1256.6 603.7 1254.8 604.9C1253.0 606.1 1250.9 608.8 1250.6 610.7C1250.4 612.7 1251.6 615.4 1253.1 616.6C1254.7 617.7 1257.6 617.5 1259.8 617.4C1262.0 617.2 1265.3 616.0 1266.4 615.7M1273.4 591.6L1272.8 608.2L1271.8 617.4M1264.8 602.9L1283.1 603.3M1293.9 604.9C1292.8 604.6 1289.3 602.4 1287.2 602.9C1285.1 603.5 1282.2 606.2 1281.4 608.2C1280.6 610.2 1281.1 613.6 1282.2 614.9C1283.3 616.1 1286.2 616.6 1288.0 615.7C1289.8 614.9 1292.0 611.8 1293.0 609.9C1294.1 608.1 1294.1 604.0 1294.4 604.6C1294.6 605.1 1294.4 611.0 1294.7 613.2C1295.0 615.4 1296.1 617.1 1296.4 617.9M1303.0 605.8L1303.8 617.4M1303.8 612.4C1304.4 611.4 1305.9 607.7 1307.2 606.6C1308.4 605.5 1310.3 605.1 1311.3 605.8C1312.3 606.4 1312.8 608.4 1313.0 610.7C1313.1 613.1 1312.3 618.4 1312.1 619.9M1337.1 594.1C1335.7 595.5 1330.9 599.2 1328.8 602.4C1326.6 605.6 1324.9 610.2 1324.3 613.2C1323.6 616.3 1324.2 619.0 1324.9 620.7C1325.7 622.4 1328.1 622.8 1328.8 623.2M1342.1 596.6C1341.0 597.6 1337.2 599.8 1335.4 602.4C1333.7 605.1 1331.9 609.6 1331.6 612.4C1331.3 615.2 1332.4 618.1 1333.8 619.0C1335.1 620.0 1337.6 619.9 1339.6 618.2C1341.5 616.6 1344.3 612.1 1345.4 609.1C1346.5 606.0 1346.8 602.0 1346.2 599.9C1345.7 597.9 1342.8 597.2 1342.1 596.6M1347.6 616.2L1348.7 617.9M1353.7 610.7L1362.8 599.1L1358.7 619.0M1380.3 600.3L1368.7 601.6M1368.7 601.6C1368.1 603.1 1364.9 609.4 1365.3 610.7C1365.8 612.1 1369.5 609.4 1371.2 609.9C1372.8 610.4 1375.0 612.1 1375.3 613.6C1375.6 615.0 1374.8 617.6 1372.8 618.6C1370.9 619.5 1365.2 619.4 1363.7 619.5M1380.3 595.8C1381.3 597.0 1384.9 600.8 1386.1 603.3C1387.3 605.8 1387.9 608.3 1387.4 610.7C1386.9 613.2 1383.8 616.7 1383.1 617.9M1389.1 588.3C1390.1 589.7 1393.8 593.3 1395.3 596.6C1396.8 599.9 1397.8 604.6 1398.1 608.2C1398.4 611.8 1397.9 615.3 1396.9 618.2C1395.9 621.1 1392.8 624.5 1391.9 625.7"/>
<path stroke="#ff00ff" stroke-width="2.20" d="M1216.6 628.9L1394.8 628.9"/>
<path stroke="#0000c4" stroke-width="1.90" d="M959.6 674.9L979.9 674.9M960.3 682.4L982.4 682.4M1047.7 672.4C1048.0 673.9 1049.5 678.9 1049.7 681.6C1049.9 684.2 1048.2 689.0 1048.9 688.5C1049.6 688.1 1052.1 681.3 1053.9 679.1C1055.7 676.8 1058.3 674.8 1059.7 674.9C1061.1 675.0 1061.7 677.7 1062.2 679.9C1062.7 682.1 1062.0 688.0 1062.7 687.9C1063.4 687.7 1064.9 681.4 1066.3 679.1C1067.8 676.8 1069.9 674.1 1071.3 674.1C1072.7 674.1 1074.1 676.6 1074.6 679.1C1075.1 681.6 1074.4 687.4 1074.3 689.0M1095.4 675.7C1094.3 675.5 1090.7 673.5 1088.8 674.1C1086.8 674.6 1084.5 677.3 1083.8 679.1C1083.1 680.9 1083.5 683.6 1084.6 684.9C1085.7 686.1 1088.6 687.1 1090.4 686.5C1092.2 686.0 1094.4 683.5 1095.4 681.6C1096.4 679.6 1096.1 673.5 1096.2 674.9C1096.4 676.3 1096.9 686.0 1096.6 689.9C1096.3 693.7 1095.9 696.5 1094.6 698.2C1093.3 699.8 1090.4 700.4 1088.8 699.8C1087.1 699.3 1085.3 695.7 1084.6 694.9M1105.4 674.1L1112.0 689.5L1121.5 674.9M1141.5 676.6L1142.5 677.9"/>
<path stroke="#0000c4" stroke-width="1.60" d="M1204.3 647.8C1203.4 648.5 1200.3 649.7 1198.6 652.0C1197.0 654.3 1194.8 658.9 1194.5 661.5C1194.2 664.0 1195.2 666.0 1196.7 667.2C1198.3 668.3 1201.4 669.4 1203.7 668.4C1206.0 667.5 1209.3 664.1 1210.6 661.5C1212.0 658.8 1212.3 654.8 1211.9 652.6C1211.5 650.4 1209.4 649.0 1208.1 648.2C1206.8 647.4 1205.0 647.9 1204.3 647.8M1216.3 666.5L1214.7 670.9M1228.1 663.4L1239.1 653.3L1236.5 669.7M1249.8 649.5L1268.5 651.1M1249.5 649.9C1249.1 651.7 1246.4 659.1 1246.6 660.8C1246.9 662.6 1249.7 659.6 1251.1 660.2C1252.4 660.8 1254.3 662.9 1254.9 664.6C1255.4 666.3 1255.1 668.9 1254.2 670.3C1253.4 671.7 1251.4 672.8 1249.8 673.1C1248.2 673.4 1245.6 672.4 1244.7 672.2M1205.6 712.3L1220.1 701.9L1218.8 717.7M1225.5 704.2L1238.4 705.1M1231.9 698.7L1232.1 710.5M1251.1 698.4C1250.1 699.4 1246.7 701.8 1245.4 704.4C1244.0 707.0 1242.7 711.7 1242.8 713.9C1243.0 716.1 1244.6 717.5 1246.0 717.7C1247.4 717.9 1249.5 717.2 1251.1 715.2C1252.6 713.2 1254.9 708.3 1255.5 705.7C1256.1 703.1 1255.3 700.6 1254.6 699.4C1253.9 698.2 1251.7 698.5 1251.1 698.4M1255.9 715.5L1256.7 716.8M1261.2 705.7L1267.2 699.4L1266.0 715.8M1274.4 705.9L1282.6 704.7M1274.4 705.9C1274.3 706.8 1272.6 710.3 1273.5 711.0C1274.5 711.7 1278.5 709.7 1280.1 710.1C1281.7 710.5 1283.3 712.3 1283.3 713.5C1283.3 714.8 1281.7 717.3 1280.1 717.7C1278.5 718.1 1274.6 716.3 1273.5 716.0M1289.0 699.4C1289.6 698.8 1291.5 696.6 1292.7 696.2C1294.0 695.8 1296.0 696.1 1296.5 696.8C1297.1 697.6 1297.0 699.3 1295.9 700.6C1294.9 702.0 1289.5 704.8 1290.2 705.1C1291.0 705.3 1298.6 702.6 1300.3 702.2M1286.2 722.1L1286.7 724.0"/>
<path stroke="#0000c4" stroke-width="2.10" d="M1165.4 680.2L1319.9 680.2"/>
<path stroke="#0000c4" stroke-width="1.70" d="M1185.1 707.2L1191.7 708.8L1198.6 718.3L1201.2 688.6L1238.4 687.8L1276.3 688.0L1289.0 688.6L1306.0 687.8"/></g><path d="M424 702h170M634 701h104" stroke="#111" stroke-width="9"/><rect x="640" y="708" width="96" height="22" fill="#111"/></g></g><g clip-path="url(#t2)"><g transform="translate(15.00,183.60) scale(0.05520) translate(-107,-65)"><path d="M130.4 66V1035M199.6 66V1035M268.8 66V1035M337.9 66V1035M407.1 66V1035M476.3 66V1035M545.5 66V1035M614.7 66V1035M683.8 66V1035M753.0 66V1035M822.2 66V1035M891.4 66V1035M960.6 66V1035M1029.7 66V1035M1098.9 66V1035M1168.1 66V1035M1237.3 66V1035M1306.5 66V1035M1375.6 66V1035M1444.8 66V1035M108 88.7H1477M108 157.9H1477M108 227.1H1477M108 296.2H1477M108 365.4H1477M108 434.6H1477M108 503.8H1477M108 573.0H1477M108 642.1H1477M108 711.3H1477M108 780.5H1477M108 849.7H1477M108 918.9H1477M108 988.0H1477" stroke="#000" stroke-opacity="0.028" stroke-width="14" fill="none"/><rect x="243" y="181.5" width="742" height="364.5" fill="#f1dfe1"/><rect x="262.6" y="332.7" width="709.3" height="188" fill="#fff"/><path d="M262.7 519.700L862.3 423.400V519.700z" fill="#c4c4c4"/><use href="#car"/><g stroke="#222" stroke-opacity="0.55" stroke-width="7"><path d="M255 249h692M255 279h714M255 309h180M518 204h198M263 532h610" /></g><g stroke="#111" stroke-opacity="0.5" stroke-width="7"><path d="M284 410h122M670 349h116M872 472h98"/></g><g stroke="#0000c4" stroke-opacity="0.75" stroke-width="8"><path d="M481 130h788M1004 173h362" stroke-dasharray="60 8"/></g><g class="tink" fill="none" stroke-linecap="round"><path stroke="#0000c4" stroke-width="2.10" d="M167.3 101.6L191.6 101.6M169.3 102.2L169.6 129.0M170.2 118.3L186.0 114.6M171.1 132.0L190.3 132.0M193.1 117.1L210.1 134.6M209.2 116.6L196.7 135.0M214.3 126.7C216.4 126.4 225.4 125.6 227.3 124.5C229.1 123.3 226.5 121.0 225.6 120.0C224.6 118.9 223.1 118.0 221.6 118.3C220.1 118.5 217.8 120.1 216.5 121.6C215.3 123.2 214.2 125.4 214.0 127.3C213.8 129.2 214.4 131.6 215.4 133.0C216.4 134.3 217.8 135.2 219.9 135.2C222.0 135.2 226.5 133.3 227.8 133.0M233.2 120.5C233.6 121.1 234.7 122.2 235.2 123.9C235.7 125.6 236.0 128.6 236.3 130.7C236.6 132.8 236.8 135.4 236.9 136.3M235.5 124.5C236.1 123.8 237.3 121.1 239.1 120.3C241.0 119.5 245.2 119.7 246.5 119.6M264.6 119.6C263.5 119.6 260.3 118.9 258.3 119.6C256.4 120.3 253.9 122.3 252.7 123.9C251.5 125.5 251.1 127.4 251.3 129.0C251.5 130.6 252.5 132.5 253.8 133.5C255.2 134.5 257.1 135.0 259.5 135.0C261.8 135.0 266.5 133.8 267.9 133.5M273.4 119.6L273.9 135.8M275.1 107.5L275.9 112.6M290.6 117.7C289.5 117.6 285.8 116.8 284.3 117.1C282.8 117.5 281.5 118.8 281.5 120.0C281.5 121.1 282.5 122.7 284.3 123.9C286.1 125.1 290.5 126.1 292.2 127.3C294.0 128.5 295.2 130.0 295.1 131.3C295.0 132.5 293.8 134.1 291.7 134.6C289.5 135.2 283.7 134.6 282.1 134.6M299.6 126.7C302.1 126.4 312.6 125.7 314.9 124.5C317.1 123.3 314.3 120.5 313.2 119.4C312.0 118.3 309.8 117.7 308.1 118.0C306.4 118.4 304.2 120.1 303.0 121.6C301.8 123.2 300.7 125.5 300.7 127.3C300.7 129.1 301.8 131.3 303.0 132.4C304.2 133.5 305.9 134.5 308.1 134.1C310.2 133.7 314.7 130.8 316.0 130.1M166.6 141.5L321.6 141.5"/>
<path stroke="#0000c4" stroke-width="2.10" d="M359.2 107.4C359.1 106.8 359.0 104.8 358.4 103.8C357.8 102.8 356.5 101.9 355.5 101.3C354.5 100.8 353.4 100.2 352.3 100.6C351.3 101.1 350.2 102.6 349.1 104.2C348.1 105.7 347.0 107.7 346.3 109.9C345.6 112.0 345.3 114.6 345.0 117.0C344.8 119.3 344.7 121.9 344.8 124.0C344.8 126.2 345.0 127.9 345.2 129.7C345.5 131.5 346.2 133.0 346.3 134.7C346.4 136.3 346.1 138.6 346.0 139.6C345.8 140.7 345.5 140.9 345.5 141.2M340.3 122.5L358.4 122.5M359.9 120.9C360.0 121.9 359.9 125.2 360.1 126.9C360.4 128.6 361.0 130.4 361.2 131.1M360.1 123.3C360.4 123.0 361.0 121.7 361.9 121.2C362.8 120.8 364.2 120.4 365.5 120.6C366.8 120.9 368.5 121.9 369.7 122.5C370.9 123.0 372.1 123.7 372.6 123.9M379.6 123.9C379.1 123.6 377.3 121.8 376.1 121.9C374.9 122.1 373.4 123.5 372.6 124.8C371.7 126.1 370.9 128.3 370.8 129.7C370.7 131.1 371.1 132.4 371.8 133.3C372.6 134.1 374.1 134.9 375.4 135.0C376.7 135.2 378.2 135.1 379.6 134.3C381.1 133.6 382.6 131.8 383.9 130.4C385.2 129.1 387.0 127.5 387.3 126.2C387.7 124.9 386.8 123.5 386.0 122.6C385.2 121.8 383.7 121.4 382.5 121.2C381.3 121.0 379.5 121.5 378.9 121.6M392.6 123.0C392.5 124.1 392.6 127.3 392.3 129.7C392.0 132.1 390.9 136.2 390.6 137.5M392.4 128.3C393.1 127.7 395.0 125.8 396.7 124.8C398.3 123.7 401.0 122.3 402.3 122.3C403.6 122.3 404.3 123.4 404.5 124.8C404.6 126.1 403.5 128.7 403.0 130.4C402.6 132.1 402.2 134.3 402.0 135.0M403.8 126.9C404.5 126.2 406.5 123.9 408.0 123.0C409.6 122.1 411.9 121.4 413.0 121.6C414.0 121.7 414.1 122.4 414.3 124.0C414.4 125.6 414.2 129.2 414.0 131.1C413.9 133.0 413.6 134.7 413.5 135.4"/></g></g></g><g clip-path="url(#t3)"><g transform="translate(15.00,268.40) scale(0.05520) translate(-107,-65)"><path d="M130.4 66V1035M199.6 66V1035M268.8 66V1035M337.9 66V1035M407.1 66V1035M476.3 66V1035M545.5 66V1035M614.7 66V1035M683.8 66V1035M753.0 66V1035M822.2 66V1035M891.4 66V1035M960.6 66V1035M1029.7 66V1035M1098.9 66V1035M1168.1 66V1035M1237.3 66V1035M1306.5 66V1035M1375.6 66V1035M1444.8 66V1035M108 88.7H1477M108 157.9H1477M108 227.1H1477M108 296.2H1477M108 365.4H1477M108 434.6H1477M108 503.8H1477M108 573.0H1477M108 642.1H1477M108 711.3H1477M108 780.5H1477M108 849.7H1477M108 918.9H1477M108 988.0H1477" stroke="#000" stroke-opacity="0.028" stroke-width="14" fill="none"/></g></g></svg>
<div id="page"></div>
<svg id="gridsvg" class="abs" style="left:0;top:0" width="1504" height="846" viewBox="0 0 1504 846"><g stroke="#c0c0c0" stroke-width="1.15" fill="none"><line x1="130.40" y1="66" x2="130.40" y2="812"/><line x1="153.46" y1="66" x2="153.46" y2="812"/><line x1="176.52" y1="66" x2="176.52" y2="812"/><line x1="199.58" y1="66" x2="199.58" y2="812"/><line x1="222.64" y1="66" x2="222.64" y2="812"/><line x1="245.70" y1="66" x2="245.70" y2="812"/><line x1="268.76" y1="66" x2="268.76" y2="812"/><line x1="291.82" y1="66" x2="291.82" y2="812"/><line x1="314.88" y1="66" x2="314.88" y2="812"/><line x1="337.94" y1="66" x2="337.94" y2="812"/><line x1="361.00" y1="66" x2="361.00" y2="812"/><line x1="384.06" y1="66" x2="384.06" y2="812"/><line x1="407.12" y1="66" x2="407.12" y2="812"/><line x1="430.18" y1="66" x2="430.18" y2="812"/><line x1="453.24" y1="66" x2="453.24" y2="812"/><line x1="476.30" y1="66" x2="476.30" y2="812"/><line x1="499.36" y1="66" x2="499.36" y2="812"/><line x1="522.42" y1="66" x2="522.42" y2="812"/><line x1="545.48" y1="66" x2="545.48" y2="812"/><line x1="568.54" y1="66" x2="568.54" y2="812"/><line x1="591.60" y1="66" x2="591.60" y2="812"/><line x1="614.66" y1="66" x2="614.66" y2="812"/><line x1="637.72" y1="66" x2="637.72" y2="812"/><line x1="660.78" y1="66" x2="660.78" y2="812"/><line x1="683.84" y1="66" x2="683.84" y2="812"/><line x1="706.90" y1="66" x2="706.90" y2="812"/><line x1="729.96" y1="66" x2="729.96" y2="812"/><line x1="753.02" y1="66" x2="753.02" y2="812"/><line x1="776.08" y1="66" x2="776.08" y2="812"/><line x1="799.14" y1="66" x2="799.14" y2="812"/><line x1="822.20" y1="66" x2="822.20" y2="812"/><line x1="845.26" y1="66" x2="845.26" y2="812"/><line x1="868.32" y1="66" x2="868.32" y2="812"/><line x1="891.38" y1="66" x2="891.38" y2="812"/><line x1="914.44" y1="66" x2="914.44" y2="812"/><line x1="937.50" y1="66" x2="937.50" y2="812"/><line x1="960.56" y1="66" x2="960.56" y2="812"/><line x1="983.62" y1="66" x2="983.62" y2="812"/><line x1="1006.68" y1="66" x2="1006.68" y2="812"/><line x1="1029.74" y1="66" x2="1029.74" y2="812"/><line x1="1052.80" y1="66" x2="1052.80" y2="812"/><line x1="1075.86" y1="66" x2="1075.86" y2="812"/><line x1="1098.92" y1="66" x2="1098.92" y2="812"/><line x1="1121.98" y1="66" x2="1121.98" y2="812"/><line x1="1145.04" y1="66" x2="1145.04" y2="812"/><line x1="1168.10" y1="66" x2="1168.10" y2="812"/><line x1="1191.16" y1="66" x2="1191.16" y2="812"/><line x1="1214.22" y1="66" x2="1214.22" y2="812"/><line x1="1237.28" y1="66" x2="1237.28" y2="812"/><line x1="1260.34" y1="66" x2="1260.34" y2="812"/><line x1="1283.40" y1="66" x2="1283.40" y2="812"/><line x1="1306.46" y1="66" x2="1306.46" y2="812"/><line x1="1329.52" y1="66" x2="1329.52" y2="812"/><line x1="1352.58" y1="66" x2="1352.58" y2="812"/><line x1="1375.64" y1="66" x2="1375.64" y2="812"/><line x1="1398.70" y1="66" x2="1398.70" y2="812"/><line x1="1421.76" y1="66" x2="1421.76" y2="812"/><line x1="1444.82" y1="66" x2="1444.82" y2="812"/><line x1="1467.88" y1="66" x2="1467.88" y2="812"/><line x1="108" y1="88.70" x2="1477" y2="88.70"/><line x1="108" y1="111.76" x2="1477" y2="111.76"/><line x1="108" y1="134.82" x2="1477" y2="134.82"/><line x1="108" y1="157.88" x2="1477" y2="157.88"/><line x1="108" y1="180.94" x2="1477" y2="180.94"/><line x1="108" y1="204.00" x2="1477" y2="204.00"/><line x1="108" y1="227.06" x2="1477" y2="227.06"/><line x1="108" y1="250.12" x2="1477" y2="250.12"/><line x1="108" y1="273.18" x2="1477" y2="273.18"/><line x1="108" y1="296.24" x2="1477" y2="296.24"/><line x1="108" y1="319.30" x2="1477" y2="319.30"/><line x1="108" y1="342.36" x2="1477" y2="342.36"/><line x1="108" y1="365.42" x2="1477" y2="365.42"/><line x1="108" y1="388.48" x2="1477" y2="388.48"/><line x1="108" y1="411.54" x2="1477" y2="411.54"/><line x1="108" y1="434.60" x2="1477" y2="434.60"/><line x1="108" y1="457.66" x2="1477" y2="457.66"/><line x1="108" y1="480.72" x2="1477" y2="480.72"/><line x1="108" y1="503.78" x2="1477" y2="503.78"/><line x1="108" y1="526.84" x2="1477" y2="526.84"/><line x1="108" y1="549.90" x2="1477" y2="549.90"/><line x1="108" y1="572.96" x2="1477" y2="572.96"/><line x1="108" y1="596.02" x2="1477" y2="596.02"/><line x1="108" y1="619.08" x2="1477" y2="619.08"/><line x1="108" y1="642.14" x2="1477" y2="642.14"/><line x1="108" y1="665.20" x2="1477" y2="665.20"/><line x1="108" y1="688.26" x2="1477" y2="688.26"/><line x1="108" y1="711.32" x2="1477" y2="711.32"/><line x1="108" y1="734.38" x2="1477" y2="734.38"/><line x1="108" y1="757.44" x2="1477" y2="757.44"/><line x1="108" y1="780.50" x2="1477" y2="780.50"/><line x1="108" y1="803.56" x2="1477" y2="803.56"/></g></svg>
<div class="abs" style="left:243px;top:181.500px;width:742px;height:364.500px;background:#f3e2e4"></div>
<div class="abs" style="left:262.600px;top:332.700px;width:709.300px;height:188px;background:#fff"></div>
<div class="abs url" style="left:479.900px;top:118.250px;transform:scaleX(0.9479)">https://opentextbc.ca/universityphysicsv1openstax/chapter/power/#CNX_UPhysics_07_04_Ex2</div>
<div class="abs url" style="left:1003.200px;top:161.350px;transform:scaleX(0.9355)">https://creativecommons.org/licenses/by/4.0/</div>
<div class="abs" style="left:518px;top:195.500px;font-size:13.900px;line-height:16px;color:#111;white-space:nowrap">Automotive Power Driving Uphill</div>
<div class="abs para" style="left:254.200px;top:236.300px">How much power must an automobile engine expend to move a 1200-kg car up a 15%</div>
<div class="abs para" style="left:254.200px;top:266.400px">grade at 90 km/h (<span style="color:#b5241c;text-decoration:underline;text-decoration-thickness:1px;text-underline-offset:2px">(Figure)</span>)? Assume that 25% of this power is dissipated overcoming air</div>
<div class="abs para" style="left:254.200px;top:296.400px">resistance and friction.</div>
<div class="abs cap" style="left:262.800px;top:521px"><b>Figure 7.15</b> We want to calculate the power needed to move a car up a hill at constant speed.</div>
<div class="abs figl" style="left:283.600px;top:397.600px"><i>m</i></div>
<div class="abs figl" style="left:334.600px;top:397.600px">1200 kg</div>
<div class="abs figl" style="left:670px;top:336.200px"><i>v</i></div>
<div class="abs figl" style="left:714.200px;top:336.200px">90 km/h</div>
<div class="abs figl" style="left:871.800px;top:458.100px;font-size:20.600px">15% grade</div>
<svg class="abs" style="left:0;top:0" width="1504" height="846" viewBox="0 0 1504 846">
<g stroke="#3c3c3c" stroke-width="1.200"><path d="M309.700 408.200h15.400M309.700 412.100h15.400M689.500 346.700h15.400M689.500 350.700h15.400"/></g>
<!-- hill -->
<path d="M262.700 519.700L862.300 423.400V519.700z" fill="#cacaca"/>
<path d="M262.700 519.300L862.300 423.300" stroke="#666" stroke-width="1.800" fill="none"/>
<!-- green arrow -->
<path d="M659.500 387.700L783 368.600" stroke="#7b9b1e" stroke-width="1.900" fill="none"/>
<path d="M797.800 366.300L780.600 363.800L782.400 373.800z" fill="#7b9b1e"/>
<!-- car -->
<g id="car" transform="translate(380,380) scale(0.17286)">
<defs><linearGradient id="wg" x1="0" y1="0" x2="0.150" y2="1"><stop offset="0" stop-color="#221c1e"/><stop offset="0.550" stop-color="#4a4446"/><stop offset="1" stop-color="#7a7476"/></linearGradient></defs>
<circle cx="380" cy="530" r="106" fill="#1b1b1f"/><path d="M455 450L546 549L380 575z" fill="#1b1b1f"/><circle cx="1215" cy="395" r="106" fill="#1b1b1f"/>
<path d="M150 602C110 600 98 570 100 500L106 395C112 362 140 348 232 322L318 212C380 172 560 128 700 110C800 104 900 122 1080 186C1200 190 1330 204 1402 236C1436 262 1446 300 1446 370C1440 392 1410 404 1340 416L1322 421A110 110 0 1 0 1112 436L1100 452L540 547C515 520 490 485 462.700 460.600A108 108 0 0 0 273.600 548.800L282 592z" fill="#82b4de"/>
<path d="M1290 290C1330 270 1400 262 1430 268C1444 300 1448 340 1446 372C1436 392 1400 404 1340 416L1322 421C1326 360 1316 320 1290 290z" fill="#3a9ccc"/>
<path d="M100 500C130 490 200 484 236 492C246 530 250 570 250 592L150 602C108 600 98 570 100 500z" fill="#3a9ccc"/>
<path d="M232 322L318 212C322 230 312 262 268 318z" fill="url(#wg)"/>
<path d="M380 296C380 250 392 212 420 196L632 152L654 260z" fill="url(#wg)"/>
<path d="M678 142C760 134 860 134 900 142L1030 200L1050 232L712 250z" fill="url(#wg)"/>
<path d="M380 296C362 330 366 380 400 410C440 440 500 470 526 520L1030 440C1060 430 1066 300 1050 232M654 140L736 450M1080 186C1060 200 1060 230 1066 250M120 362C170 346 230 340 268 318" fill="none" stroke="#3a8fd6" stroke-width="6"/>
<path d="M380 296C380 250 392 212 420 196L632 152M678 142C760 134 860 134 900 142L1030 200" fill="none" stroke="#3a8fd6" stroke-width="8"/>
<path d="M526 520L1030 440L1032 462L540 544z" fill="#6aa4d8"/>
<path d="M640 472L900 434" stroke="#2f86d2" stroke-width="9" fill="none"/>
<path d="M396 352L452 344M720 316L778 306" stroke="#0a0a0a" stroke-width="14" fill="none"/>
<path d="M1022 212L1100 224L1110 234L1066 250L1034 244z" fill="#58585c"/>
<path d="M106 410C106 396 134 396 136 410L138 486L108 492z" fill="#e81c24"/>
<path d="M1304 226C1314 200 1400 222 1424 262C1380 266 1336 258 1304 240z" fill="#b4b4b4"/>
<path d="M1310 238C1340 226 1380 240 1394 262C1360 264 1330 256 1310 246z" fill="#f5c000"/>
<path d="M1400 350L1440 340L1446 372L1420 372z" fill="#2a6cc0"/>
<g id="wh"><circle cx="380" cy="530" r="97" fill="#1c1c1c"/><circle cx="380" cy="530" r="74" fill="#3c3c3c"/><g stroke="#f2f2f2" stroke-width="15" stroke-linecap="round"><path d="M380 530V462M380 530L420 475M380 530L445 509M380 530L445 551M380 530L420 585M380 530V598M380 530L340 585M380 530L315 551M380 530L315 509M380 530L340 475"/></g><circle cx="380" cy="530" r="24" fill="#d4d4d4"/><circle cx="380" cy="530" r="12" fill="#bdbdbd"/><circle cx="380" cy="530" r="76" fill="none" stroke="#dcdcdc" stroke-width="6"/></g>
<use href="#wh" x="835" y="-135"/>
</g>
<!-- latex formula -->
<g font-family="Liberation Serif" fill="#111">
<text x="423.600" y="707.600" font-size="24" textLength="169" lengthAdjust="spacingAndGlyphs">sin(arctan(<tspan font-style="italic">m</tspan>))</text>
<path d="M603.600 700.200h18M603.600 705.600h18" stroke="#111" stroke-width="1.100"/>
<text x="675.300" y="689.100" font-size="24" font-style="italic" textLength="21.400" lengthAdjust="spacingAndGlyphs">m</text>
<path d="M633.900 700.700h104.200" stroke="#111" stroke-width="1.200"/>
<path d="M636.900 722.200l2.800-1.800l5.600 10.800l7.800-24.600h85" stroke="#111" stroke-width="1.150" fill="none"/>
<text x="657.600" y="729.400" font-size="24">1</text>
<path d="M677 721.200h15.200M684.600 713.600v15.200" stroke="#111" stroke-width="1.100"/>
<text x="703.700" y="729.400" font-size="24" font-style="italic" textLength="22.500" lengthAdjust="spacingAndGlyphs">m</text>
<text x="727.700" y="721.600" font-size="16.500">2</text>
</g>
</svg>

<svg id="ink" class="abs" style="left:0;top:0" width="1504" height="846" viewBox="0 0 1504 846">
<defs><clipPath id="pc"><rect x="108" y="66" width="1369" height="746"/></clipPath></defs>
<g clip-path="url(#pc)" fill="none" stroke-linecap="round" stroke-linejoin="round">
<path stroke="#0000c4" stroke-width="2.10" d="M167.3 101.6L191.6 101.6M169.3 102.2L169.6 129.0M170.2 118.3L186.0 114.6M171.1 132.0L190.3 132.0M193.1 117.1L210.1 134.6M209.2 116.6L196.7 135.0M214.3 126.7C216.4 126.4 225.4 125.6 227.3 124.5C229.1 123.3 226.5 121.0 225.6 120.0C224.6 118.9 223.1 118.0 221.6 118.3C220.1 118.5 217.8 120.1 216.5 121.6C215.3 123.2 214.2 125.4 214.0 127.3C213.8 129.2 214.4 131.6 215.4 133.0C216.4 134.3 217.8 135.2 219.9 135.2C222.0 135.2 226.5 133.3 227.8 133.0M233.2 120.5C233.6 121.1 234.7 122.2 235.2 123.9C235.7 125.6 236.0 128.6 236.3 130.7C236.6 132.8 236.8 135.4 236.9 136.3M235.5 124.5C236.1 123.8 237.3 121.1 239.1 120.3C241.0 119.5 245.2 119.7 246.5 119.6M264.6 119.6C263.5 119.6 260.3 118.9 258.3 119.6C256.4 120.3 253.9 122.3 252.7 123.9C251.5 125.5 251.1 127.4 251.3 129.0C251.5 130.6 252.5 132.5 253.8 133.5C255.2 134.5 257.1 135.0 259.5 135.0C261.8 135.0 266.5 133.8 267.9 133.5M273.4 119.6L273.9 135.8M275.1 107.5L275.9 112.6M290.6 117.7C289.5 117.6 285.8 116.8 284.3 117.1C282.8 117.5 281.5 118.8 281.5 120.0C281.5 121.1 282.5 122.7 284.3 123.9C286.1 125.1 290.5 126.1 292.2 127.3C294.0 128.5 295.2 130.0 295.1 131.3C295.0 132.5 293.8 134.1 291.7 134.6C289.5 135.2 283.7 134.6 282.1 134.6M299.6 126.7C302.1 126.4 312.6 125.7 314.9 124.5C317.1 123.3 314.3 120.5 313.2 119.4C312.0 118.3 309.8 117.7 308.1 118.0C306.4 118.4 304.2 120.1 303.0 121.6C301.8 123.2 300.7 125.5 300.7 127.3C300.7 129.1 301.8 131.3 303.0 132.4C304.2 133.5 305.9 134.5 308.1 134.1C310.2 133.7 314.7 130.8 316.0 130.1M166.6 141.5L321.6 141.5"/>
<path stroke="#0000c4" stroke-width="2.10" d="M359.2 107.4C359.1 106.8 359.0 104.8 358.4 103.8C357.8 102.8 356.5 101.9 355.5 101.3C354.5 100.8 353.4 100.2 352.3 100.6C351.3 101.1 350.2 102.6 349.1 104.2C348.1 105.7 347.0 107.7 346.3 109.9C345.6 112.0 345.3 114.6 345.0 117.0C344.8 119.3 344.7 121.9 344.8 124.0C344.8 126.2 345.0 127.9 345.2 129.7C345.5 131.5 346.2 133.0 346.3 134.7C346.4 136.3 346.1 138.6 346.0 139.6C345.8 140.7 345.5 140.9 345.5 141.2M340.3 122.5L358.4 122.5M359.9 120.9C360.0 121.9 359.9 125.2 360.1 126.9C360.4 128.6 361.0 130.4 361.2 131.1M360.1 123.3C360.4 123.0 361.0 121.7 361.9 121.2C362.8 120.8 364.2 120.4 365.5 120.6C366.8 120.9 368.5 121.9 369.7 122.5C370.9 123.0 372.1 123.7 372.6 123.9M379.6 123.9C379.1 123.6 377.3 121.8 376.1 121.9C374.9 122.1 373.4 123.5 372.6 124.8C371.7 126.1 370.9 128.3 370.8 129.7C370.7 131.1 371.1 132.4 371.8 133.3C372.6 134.1 374.1 134.9 375.4 135.0C376.7 135.2 378.2 135.1 379.6 134.3C381.1 133.6 382.6 131.8 383.9 130.4C385.2 129.1 387.0 127.5 387.3 126.2C387.7 124.9 386.8 123.5 386.0 122.6C385.2 121.8 383.7 121.4 382.5 121.2C381.3 121.0 379.5 121.5 378.9 121.6M392.6 123.0C392.5 124.1 392.6 127.3 392.3 129.7C392.0 132.1 390.9 136.2 390.6 137.5M392.4 128.3C393.1 127.7 395.0 125.8 396.7 124.8C398.3 123.7 401.0 122.3 402.3 122.3C403.6 122.3 404.3 123.4 404.5 124.8C404.6 126.1 403.5 128.7 403.0 130.4C402.6 132.1 402.2 134.3 402.0 135.0M403.8 126.9C404.5 126.2 406.5 123.9 408.0 123.0C409.6 122.1 411.9 121.4 413.0 121.6C414.0 121.7 414.1 122.4 414.3 124.0C414.4 125.6 414.2 129.2 414.0 131.1C413.9 133.0 413.6 134.7 413.5 135.4"/>
<path stroke="#0000c4" stroke-width="1.35" d="M398.8 198.8L399.7 209.6L400.0 221.7M399.5 196.9C400.6 196.6 404.4 195.6 406.2 195.5C408.0 195.3 409.3 194.9 410.4 195.9C411.5 196.9 412.7 200.1 412.6 201.6C412.5 203.1 412.0 203.6 409.9 204.9C407.9 206.2 402.1 208.8 400.5 209.6M391.8 217.2L369.8 239.4M374.2 223.8L369.8 239.4L385.8 235.1"/>
<path stroke="#0000c4" stroke-width="1.60" d="M343.8 260.7L396.7 260.7"/>
<path stroke="#0000c4" stroke-width="1.30" d="M804.5 199.7C804.8 201.0 806.0 205.8 806.4 207.7C806.8 209.7 806.7 211.8 807.1 211.5C807.4 211.3 807.8 208.1 808.8 206.3C809.7 204.5 811.6 201.0 812.5 200.7C813.5 200.3 814.0 202.6 814.4 204.0C814.9 205.3 814.7 209.0 815.2 208.7C815.7 208.4 816.4 203.8 817.3 202.1C818.2 200.3 819.9 197.8 820.6 198.3C821.2 198.8 821.1 202.8 821.0 204.9C821.0 207.0 820.4 209.8 820.3 210.8M809.2 218.1L790.0 235.9M795.0 220.2L790.0 235.9L806.1 232.1"/>
<path stroke="#0000c4" stroke-width="1.50" d="M199.6 298.7L206.0 308.3L212.6 317.9M212.6 317.9C212.4 316.8 211.6 313.8 211.8 311.5C212.0 309.2 212.8 306.0 213.9 304.0C215.1 302.1 217.9 300.3 218.7 299.6"/>
<path stroke="#0000c4" stroke-width="1.20" d="M227.0 304.7L330.6 289.4M316.8 285.7L330.6 289.4L319.6 296.6"/>
<path stroke="#ff00ff" stroke-width="2.00" d="M909.3 262.6L949.1 262.6"/>
<path stroke="#00b8f4" stroke-width="2.00" d="M592.8 293.2L843.8 293.2"/>
<path stroke="#ff00ff" stroke-width="2.00" d="M870.4 483.8L980.2 483.8"/>
<path stroke="#0000c4" stroke-width="1.50" d="M662.3 385.3L662.3 470.8M656.2 459.5L662.9 471.2L672.7 455.2M629.8 403.2C630.7 403.4 631.8 405.2 635.6 404.9C639.4 404.5 649.7 401.8 652.5 401.2M646.7 399.6L653.6 400.9L649.6 408.0M648.0 414.9C647.2 414.1 645.0 410.6 643.4 410.3C641.8 410.0 639.4 411.6 638.2 412.9C637.0 414.2 635.8 416.7 636.3 418.1C636.7 419.5 639.2 421.0 640.8 421.4C642.4 421.7 644.8 421.0 646.0 420.1C647.2 419.1 647.5 414.8 648.0 415.5C648.4 416.3 648.3 421.8 648.6 424.6C648.9 427.4 650.8 430.4 649.9 432.4C649.0 434.5 645.6 436.8 643.4 437.0C641.2 437.2 638.0 434.3 636.9 433.7"/>
<path stroke="#ff00ff" stroke-width="1.70" d="M681.1 394.1C680.0 394.6 676.5 395.5 674.6 397.3C672.8 399.2 670.6 402.6 670.1 405.1C669.5 407.6 670.2 410.7 671.4 412.3C672.6 413.8 675.4 414.8 677.2 414.2C679.1 413.7 681.3 411.4 682.4 409.0C683.5 406.6 684.0 402.4 684.0 399.9C684.0 397.4 682.7 395.0 682.4 394.1M671.4 404.9L683.7 404.1"/>
<path stroke="#ff00ff" stroke-width="2.10" d="M704.5 381.4C704.3 383.0 704.3 387.1 703.2 390.8C702.1 394.5 700.2 399.9 698.0 403.8C695.9 407.7 693.3 411.2 690.2 414.2C687.2 417.2 683.1 420.2 679.8 422.0C676.6 423.9 673.2 424.9 670.7 425.3C668.2 425.7 666.3 424.8 664.9 424.4C663.4 423.9 662.4 422.7 661.9 422.4"/>
<path stroke="#008000" stroke-width="1.70" d="M726.4 384.0L746.8 381.4M740.3 378.1L747.4 380.4L742.9 385.3M730.5 389.5L735.1 398.0L745.5 386.9"/>
<path stroke="#ff00ff" stroke-width="1.60" d="M414.9 502.9C414.1 502.6 411.4 500.6 409.6 500.9C407.9 501.2 405.3 503.5 404.3 504.9C403.3 506.3 403.0 508.6 403.6 509.5C404.3 510.5 406.6 511.4 408.3 510.9C410.0 510.3 412.5 507.7 413.6 506.2C414.7 504.8 414.7 501.8 414.9 502.2C415.2 502.7 414.7 507.2 414.9 508.9C415.2 510.6 416.1 512.0 416.3 512.6M420.9 502.9C421.2 503.7 421.9 506.3 422.3 507.6C422.6 508.8 422.8 510.0 422.9 510.5M422.3 506.2C422.8 505.7 424.0 503.3 425.6 502.9C427.1 502.5 430.6 503.5 431.6 503.6M446.2 499.8C445.2 499.8 442.1 499.1 440.2 499.8C438.3 500.6 435.8 502.8 434.9 504.2C434.0 505.6 434.0 507.3 434.9 508.2C435.8 509.2 437.8 510.1 440.2 509.9C442.7 509.8 448.0 508.0 449.5 507.6M456.4 491.6L456.2 510.2M449.5 500.6L464.1 499.8M473.5 501.6C472.5 501.2 469.4 499.1 467.5 499.6C465.6 500.0 463.2 502.8 462.2 504.2C461.2 505.7 460.8 507.3 461.5 508.2C462.2 509.1 464.5 510.0 466.1 509.5C467.8 509.1 470.2 507.0 471.5 505.6C472.7 504.1 473.0 500.6 473.5 500.9C473.9 501.2 473.7 505.9 474.1 507.6C474.5 509.2 475.6 510.3 475.9 510.9M481.4 502.9L482.5 509.5M482.1 507.6C482.7 506.7 484.1 503.4 485.4 502.2C486.8 501.1 488.9 500.3 490.1 500.6C491.3 501.0 492.2 502.6 492.7 504.2C493.3 505.8 493.3 509.2 493.4 510.2M505.4 486.3C504.5 487.6 501.2 491.4 500.1 494.3C498.9 497.1 498.6 500.9 498.7 503.6C498.8 506.2 499.9 508.6 500.7 510.2C501.5 511.8 502.9 512.7 503.4 513.1M511.4 493.6C510.8 494.6 508.6 497.6 508.0 499.6C507.5 501.6 507.5 504.3 508.0 505.6C508.6 506.8 510.1 507.6 511.4 506.9C512.6 506.2 514.6 503.6 515.3 501.6C516.1 499.6 516.6 496.4 516.0 494.9C515.5 493.5 512.7 493.3 512.0 492.9M518.0 505.6L517.3 507.8M520.7 501.6L528.6 490.9L528.6 507.6M534.0 491.6L542.6 490.3M534.0 491.6C533.9 492.9 532.5 498.2 533.3 499.6C534.1 500.9 537.1 499.2 538.6 499.8C540.2 500.5 542.3 502.1 542.6 503.6C542.9 505.1 542.3 507.8 540.6 508.9C538.9 509.9 534.0 509.8 532.6 509.9M540.6 486.0C541.6 486.9 545.1 489.1 546.6 491.6C548.1 494.1 549.3 498.0 549.5 500.9C549.7 503.8 549.1 506.9 547.9 508.9C546.8 510.8 543.5 512.0 542.6 512.6"/>
<path stroke="#ff00ff" stroke-width="2.20" d="M567.6 470.6C568.5 471.9 571.5 475.2 573.2 478.3C574.9 481.4 576.8 485.4 577.8 488.9C578.9 492.5 579.4 496.0 579.6 499.6C579.8 503.1 579.5 507.3 579.2 510.2C578.8 513.1 577.7 516.0 577.4 517.1"/>
<path stroke="#ff00ff" stroke-width="1.75" d="M1038.5 380.5C1037.8 382.0 1035.2 386.1 1033.8 389.1C1032.4 392.2 1030.8 395.7 1030.2 398.7C1029.6 401.7 1029.5 405.0 1030.2 407.1C1030.9 409.2 1032.6 411.0 1034.4 411.3C1036.2 411.6 1038.6 410.3 1040.9 408.9C1043.2 407.5 1046.6 404.9 1048.1 402.9C1049.6 400.9 1050.1 399.4 1049.9 396.9C1049.7 394.4 1048.3 390.4 1046.9 388.0C1045.5 385.5 1042.9 383.2 1041.5 382.0C1040.1 380.7 1039.0 380.8 1038.5 380.5M1030.2 398.5C1032.1 398.4 1038.4 397.5 1041.5 398.1C1044.7 398.7 1048.0 401.4 1049.3 402.1M1069.1 392.7L1083.4 392.7M1069.1 397.8L1088.5 397.8M1121.7 386.8C1120.9 386.2 1118.7 383.7 1116.9 383.2C1115.1 382.6 1112.6 382.6 1111.0 383.4C1109.3 384.2 1107.3 386.3 1106.8 388.0C1106.3 389.6 1106.7 392.2 1108.0 393.3C1109.3 394.4 1112.4 394.8 1114.5 394.5C1116.6 394.2 1119.3 393.0 1120.5 391.5C1121.8 390.0 1121.6 384.6 1122.0 385.6C1122.3 386.6 1122.7 394.0 1122.7 397.5C1122.6 401.0 1122.7 404.5 1121.7 406.5C1120.8 408.5 1118.7 409.5 1116.9 409.5C1115.1 409.5 1112.4 407.6 1111.0 406.5C1109.5 405.4 1108.5 403.5 1108.0 402.9M1135.5 383.8C1134.7 384.3 1132.2 384.9 1130.7 386.8C1129.2 388.6 1127.3 392.3 1126.5 395.1C1125.7 397.9 1125.4 401.4 1125.9 403.5C1126.4 405.7 1128.1 407.7 1129.5 408.1C1130.9 408.5 1132.9 407.7 1134.3 405.9C1135.7 404.1 1137.3 400.5 1137.9 397.5C1138.5 394.5 1138.3 390.2 1137.9 388.0C1137.5 385.7 1135.9 384.5 1135.5 383.8M1151.6 381.0C1150.8 381.2 1148.1 381.1 1146.9 382.0C1145.7 382.8 1144.5 384.9 1144.5 386.2C1144.5 387.5 1145.8 389.4 1146.9 389.7C1148.0 390.0 1150.1 388.9 1151.0 388.0C1152.0 387.0 1152.5 384.9 1152.6 383.8C1152.7 382.6 1151.8 381.5 1151.6 381.0M1158.8 397.8L1174.6 397.5M1166.2 391.5L1167.0 404.7"/>
<path stroke="#ff00ff" stroke-width="1.75" d="M1196.5 400.0C1195.4 399.5 1191.8 396.8 1189.5 396.8C1187.3 396.8 1184.7 398.4 1183.3 400.0C1181.8 401.6 1180.7 404.5 1180.9 406.3C1181.1 408.1 1183.0 410.4 1184.7 410.8C1186.3 411.1 1189.0 410.2 1190.9 408.4C1192.9 406.6 1195.5 400.4 1196.5 400.0C1197.6 399.7 1196.6 404.4 1197.2 406.3C1197.8 408.2 1199.6 410.4 1200.0 411.2M1203.5 400.0C1203.9 401.2 1205.2 405.1 1205.6 407.0C1206.0 408.9 1206.0 410.8 1206.0 411.6M1205.6 404.9C1206.3 404.0 1208.0 400.8 1209.8 399.6C1211.5 398.4 1215.0 398.2 1216.1 397.9M1230.7 400.0C1229.7 400.0 1226.3 399.2 1224.5 400.0C1222.6 400.8 1220.4 403.3 1219.6 404.9C1218.8 406.5 1218.5 408.5 1219.6 409.8C1220.6 411.1 1223.2 412.4 1225.9 412.6C1228.5 412.8 1233.3 411.7 1235.6 411.2C1238.0 410.7 1239.1 410.0 1239.8 409.8M1244.3 381.9C1244.0 384.5 1243.6 393.2 1242.9 397.9C1242.1 402.7 1240.3 408.4 1239.8 410.5M1232.6 396.2L1253.8 399.0M1255.9 399.6C1254.8 399.8 1251.2 399.5 1249.6 400.7C1248.0 402.0 1246.2 405.4 1246.1 407.0C1246.0 408.6 1247.6 410.4 1248.9 410.5C1250.2 410.6 1252.5 409.4 1253.8 407.7C1255.0 406.0 1255.8 400.0 1256.3 400.0C1256.8 400.0 1256.6 405.8 1256.8 407.7C1257.1 409.6 1257.8 411.0 1258.0 411.6M1264.9 411.6C1265.4 410.3 1266.5 405.7 1267.7 403.5C1269.0 401.3 1271.1 398.9 1272.6 398.6C1274.1 398.4 1275.8 400.0 1276.8 402.1C1277.9 404.2 1278.6 409.7 1278.9 411.2M1301.2 386.5C1300.1 387.7 1296.1 390.9 1294.3 393.7C1292.4 396.6 1290.7 400.6 1290.1 403.5C1289.4 406.4 1289.4 409.5 1290.4 411.2C1291.3 412.9 1294.8 413.2 1295.7 413.6M1311.7 387.5C1310.6 388.4 1306.6 390.4 1304.7 393.0C1302.9 395.7 1301.0 400.8 1300.6 403.5C1300.1 406.2 1300.8 408.5 1301.9 409.1C1303.1 409.7 1305.7 409.1 1307.5 407.0C1309.4 404.9 1312.1 399.6 1313.1 396.5C1314.2 393.5 1314.0 390.4 1313.8 388.8C1313.6 387.3 1312.1 387.7 1311.7 387.5M1312.4 410.5L1313.8 411.6M1322.2 401.8L1332.7 388.8L1328.5 409.8M1358.5 390.9L1343.8 388.4M1344.5 388.8C1343.7 390.8 1339.3 398.6 1339.6 400.7C1340.0 402.8 1344.6 400.6 1346.6 401.4C1348.6 402.2 1351.2 404.0 1351.5 405.6C1351.9 407.2 1351.3 410.5 1348.7 411.2C1346.2 411.9 1338.2 410.0 1336.2 409.8M1355.7 382.3C1356.6 383.7 1360.2 387.9 1361.3 390.9C1362.3 394.0 1362.5 397.5 1362.0 400.7C1361.5 404.0 1360.0 408.2 1358.5 410.5C1357.0 412.8 1354.1 413.7 1353.2 414.4"/>
<path stroke="#0000c4" stroke-width="1.90" d="M280.7 588.5C279.5 588.8 275.7 588.6 273.4 590.4C271.1 592.1 268.3 596.1 266.8 599.1C265.4 602.2 264.3 606.2 264.6 608.6C265.0 611.1 266.8 613.0 269.0 613.8C271.2 614.5 275.1 614.4 277.8 613.0C280.5 611.7 283.6 608.6 285.1 605.7C286.6 602.8 286.8 598.2 286.6 595.5C286.3 592.8 284.7 590.8 283.6 589.6C282.5 588.5 280.6 588.7 280.0 588.5M289.2 612.7L289.8 614.5M294.6 592.8L313.2 590.4L307.8 601.3L304.9 614.5M298.3 605.0L314.4 604.3M339.2 587.9L319.5 589.6M319.9 589.6L319.9 601.3M319.9 601.3C321.4 601.2 326.6 599.9 329.0 600.6C331.4 601.3 333.4 603.6 334.1 605.7C334.8 607.8 334.7 611.3 333.4 613.0C332.0 614.8 328.6 616.4 326.1 616.3C323.5 616.1 319.4 613.0 318.0 612.3M348.0 590.4L347.7 604.3L347.3 617.4M348.3 590.4C350.0 590.2 355.5 589.4 358.3 589.6C361.0 589.9 363.6 590.5 364.8 591.8C366.1 593.2 366.7 595.8 365.6 597.7C364.5 599.5 361.1 601.3 358.3 602.8C355.4 604.3 350.0 605.8 348.3 606.5M429.9 603.5L449.7 603.5M430.7 610.8L451.9 610.8"/>
<path stroke="#00b8f4" stroke-width="2.30" d="M253.7 641.7L379.5 641.7"/>
<path stroke="#0000c4" stroke-width="1.90" d="M490.2 585.5L490.2 625.5M503.4 605.7C503.5 606.7 504.4 609.7 504.4 611.6C504.3 613.4 502.3 617.2 502.9 616.7C503.5 616.2 506.2 610.6 508.0 608.6C509.9 606.7 512.5 604.9 513.9 605.0C515.3 605.1 516.2 607.5 516.5 609.4C516.8 611.2 515.0 616.2 515.6 616.0C516.3 615.7 518.7 609.7 520.5 607.9C522.2 606.1 525.0 604.7 526.3 605.0C527.7 605.2 528.2 607.4 528.5 609.4C528.8 611.3 528.3 615.5 528.2 616.7M532.9 596.9L556.3 592.6M542.8 590.8L556.6 592.3L551.9 601.3M549.0 606.5C548.0 606.2 545.1 604.5 543.1 605.0C541.2 605.5 538.4 607.7 537.3 609.4C536.2 611.1 535.8 613.9 536.6 615.2C537.3 616.6 539.7 617.7 541.7 617.4C543.6 617.2 546.9 615.6 548.3 613.8C549.6 611.9 549.2 605.6 549.7 606.5C550.2 607.3 551.1 615.5 551.2 618.9C551.3 622.3 551.4 625.0 550.5 626.9C549.5 628.9 547.3 630.2 545.3 630.6C543.4 631.0 539.9 629.9 538.8 629.1C537.6 628.4 538.5 626.7 538.5 626.2M561.4 607.9L562.2 610.8M569.2 596.7L595.1 593.7M582.6 590.4L595.1 593.7L585.6 602.1M570.9 605.7L577.5 618.2L587.0 606.5M614.8 580.9L614.8 622.5M659.4 605.0L679.9 605.0M660.2 612.3L682.1 612.3"/>
<path stroke="#0000c4" stroke-width="1.90" d="M723.0 590.4L723.0 626.2M728.5 602.1C728.8 603.6 729.5 608.9 730.0 611.6C730.5 614.3 730.7 618.8 731.5 618.2C732.2 617.5 733.0 610.5 734.4 607.9C735.7 605.4 738.0 603.0 739.5 602.8C741.0 602.6 742.5 604.1 743.2 606.5C743.8 608.8 743.0 616.6 743.6 616.7C744.2 616.8 745.4 609.5 746.8 607.2C748.2 604.9 750.5 602.9 751.9 602.8C753.4 602.7 754.9 604.0 755.6 606.5C756.3 608.9 756.2 615.6 756.3 617.4M775.3 604.3C774.2 603.9 770.8 601.7 768.8 602.1C766.7 602.4 764.1 604.6 762.9 606.5C761.7 608.3 760.8 611.4 761.4 613.0C762.0 614.6 764.6 616.1 766.6 616.0C768.5 615.8 771.6 614.4 773.1 612.3C774.7 610.2 775.3 602.4 775.8 603.5C776.3 604.6 776.4 614.4 776.1 618.9C775.8 623.4 775.2 628.0 773.9 630.6C772.5 633.1 769.9 634.1 768.0 634.2C766.2 634.4 763.6 632.8 762.9 631.3C762.2 629.9 763.5 626.4 763.6 625.5M786.3 602.8L794.4 616.7L803.1 601.3M825.8 603.5C824.6 603.4 820.8 602.1 818.5 602.8C816.2 603.5 813.2 606.1 811.9 607.9C810.6 609.7 809.8 612.3 810.4 613.8C811.1 615.2 813.2 616.6 815.6 616.7C817.9 616.8 822.9 614.9 824.3 614.5M834.6 604.3C833.7 604.9 830.6 606.2 829.5 607.9C828.4 609.6 827.5 613.0 828.0 614.5C828.5 616.0 830.8 617.4 832.4 617.1C834.0 616.9 836.4 614.8 837.5 613.0C838.6 611.3 839.5 607.9 839.0 606.5C838.5 605.0 835.3 604.6 834.6 604.3M849.2 603.5C848.2 603.5 844.7 602.9 843.4 603.5C842.0 604.1 840.7 606.0 841.2 607.2C841.7 608.4 844.8 609.5 846.3 610.8C847.7 612.2 849.9 613.9 849.9 615.2C849.9 616.6 848.2 618.5 846.3 618.9C844.3 619.3 839.6 617.7 838.2 617.4M866.8 593.3C865.4 594.7 860.7 598.8 858.7 602.1C856.7 605.4 855.3 610.2 854.8 613.0C854.2 615.8 854.8 617.5 855.4 618.9C855.9 620.2 857.8 620.7 858.3 621.1M877.0 590.8C875.8 591.8 871.6 594.3 869.7 596.9C867.7 599.6 865.8 603.8 865.3 606.5C864.8 609.1 865.7 611.8 866.8 613.0C867.9 614.3 869.9 614.9 871.9 613.8C873.8 612.7 876.8 609.3 878.5 606.5C880.2 603.6 882.2 599.6 882.1 596.9C882.0 594.3 878.5 591.8 877.7 590.8M867.5 605.7L880.7 603.5M880.2 593.3C881.3 594.1 885.0 596.1 886.5 598.4C888.0 600.7 889.2 604.1 889.4 607.2C889.7 610.2 889.1 614.3 888.0 616.7C886.9 619.1 883.7 620.7 882.9 621.5M898.9 591.1L898.9 626.2"/>
<path stroke="#0000c4" stroke-width="1.90" d="M958.0 601.3L978.2 601.3M958.6 609.1L980.7 609.1M1043.1 603.3C1043.5 604.8 1045.3 609.7 1045.6 612.4C1045.8 615.1 1044.0 620.0 1044.7 619.5C1045.4 619.1 1048.0 612.2 1049.7 609.9C1051.4 607.6 1053.4 605.6 1054.7 605.8C1055.9 605.9 1056.8 608.6 1057.2 610.7C1057.6 612.9 1056.4 618.8 1057.2 618.6C1058.0 618.3 1060.5 611.3 1062.2 609.1C1063.8 606.8 1065.8 604.8 1067.2 604.9C1068.5 605.1 1069.9 607.5 1070.5 609.9C1071.0 612.3 1070.5 617.9 1070.5 619.5M1092.1 605.8C1091.0 605.5 1087.4 603.5 1085.4 604.1C1083.5 604.6 1081.3 607.3 1080.5 609.1C1079.6 610.9 1079.5 613.6 1080.5 614.9C1081.4 616.1 1084.4 617.0 1086.3 616.6C1088.1 616.1 1090.5 614.3 1091.6 612.4C1092.6 610.5 1092.4 603.7 1092.6 604.9C1092.8 606.2 1093.3 616.0 1092.9 619.9C1092.6 623.8 1091.8 626.5 1090.4 628.2C1089.0 629.9 1086.3 630.4 1084.6 629.9C1083.0 629.3 1081.2 625.7 1080.5 624.9M1100.4 605.8L1107.6 619.9L1117.9 604.9M1142.0 603.3C1140.7 603.5 1136.1 603.6 1134.5 604.6C1132.8 605.6 1131.3 607.8 1132.0 609.1C1132.7 610.4 1136.8 611.3 1138.6 612.4C1140.4 613.5 1142.8 614.7 1142.8 615.7C1142.8 616.7 1140.7 618.2 1138.6 618.6C1136.6 618.9 1131.7 618.0 1130.3 617.9M1151.9 604.1L1152.8 617.4M1151.9 594.9L1152.4 597.4M1160.2 604.9L1161.1 617.4M1160.7 611.6C1161.6 610.5 1164.2 606.2 1166.1 604.9C1167.9 603.6 1170.4 602.9 1171.9 603.6C1173.3 604.3 1174.2 606.5 1174.7 609.1C1175.3 611.7 1175.1 617.4 1175.2 619.0"/>
<path stroke="#0000c4" stroke-width="1.90" d="M1210.8 590.8C1209.5 592.0 1205.1 595.4 1203.3 598.3C1201.5 601.2 1199.9 605.1 1199.9 608.2C1199.9 611.4 1201.6 615.0 1203.3 617.4C1205.0 619.7 1209.1 621.5 1210.3 622.4M1229.9 604.1C1228.6 603.7 1224.5 601.2 1222.4 601.6C1220.2 602.0 1217.7 604.6 1216.9 606.6C1216.1 608.5 1216.3 611.8 1217.4 613.2C1218.5 614.6 1221.3 615.7 1223.2 614.9C1225.2 614.1 1227.9 610.2 1229.0 608.2C1230.1 606.3 1229.7 602.6 1229.9 603.3C1230.0 604.0 1229.6 610.2 1229.9 612.4C1230.1 614.6 1231.3 615.9 1231.5 616.6M1239.0 604.1C1239.3 605.3 1240.5 609.4 1240.7 611.6C1240.9 613.8 1240.3 616.4 1240.2 617.4M1240.7 609.9C1241.2 609.1 1242.5 606.0 1244.0 604.9C1245.5 603.9 1248.8 603.8 1249.8 603.6M1261.4 603.6C1260.3 603.8 1256.6 603.7 1254.8 604.9C1253.0 606.1 1250.9 608.8 1250.6 610.7C1250.4 612.7 1251.6 615.4 1253.1 616.6C1254.7 617.7 1257.6 617.5 1259.8 617.4C1262.0 617.2 1265.3 616.0 1266.4 615.7M1273.4 591.6L1272.8 608.2L1271.8 617.4M1264.8 602.9L1283.1 603.3M1293.9 604.9C1292.8 604.6 1289.3 602.4 1287.2 602.9C1285.1 603.5 1282.2 606.2 1281.4 608.2C1280.6 610.2 1281.1 613.6 1282.2 614.9C1283.3 616.1 1286.2 616.6 1288.0 615.7C1289.8 614.9 1292.0 611.8 1293.0 609.9C1294.1 608.1 1294.1 604.0 1294.4 604.6C1294.6 605.1 1294.4 611.0 1294.7 613.2C1295.0 615.4 1296.1 617.1 1296.4 617.9M1303.0 605.8L1303.8 617.4M1303.8 612.4C1304.4 611.4 1305.9 607.7 1307.2 606.6C1308.4 605.5 1310.3 605.1 1311.3 605.8C1312.3 606.4 1312.8 608.4 1313.0 610.7C1313.1 613.1 1312.3 618.4 1312.1 619.9M1337.1 594.1C1335.7 595.5 1330.9 599.2 1328.8 602.4C1326.6 605.6 1324.9 610.2 1324.3 613.2C1323.6 616.3 1324.2 619.0 1324.9 620.7C1325.7 622.4 1328.1 622.8 1328.8 623.2M1342.1 596.6C1341.0 597.6 1337.2 599.8 1335.4 602.4C1333.7 605.1 1331.9 609.6 1331.6 612.4C1331.3 615.2 1332.4 618.1 1333.8 619.0C1335.1 620.0 1337.6 619.9 1339.6 618.2C1341.5 616.6 1344.3 612.1 1345.4 609.1C1346.5 606.0 1346.8 602.0 1346.2 599.9C1345.7 597.9 1342.8 597.2 1342.1 596.6M1347.6 616.2L1348.7 617.9M1353.7 610.7L1362.8 599.1L1358.7 619.0M1380.3 600.3L1368.7 601.6M1368.7 601.6C1368.1 603.1 1364.9 609.4 1365.3 610.7C1365.8 612.1 1369.5 609.4 1371.2 609.9C1372.8 610.4 1375.0 612.1 1375.3 613.6C1375.6 615.0 1374.8 617.6 1372.8 618.6C1370.9 619.5 1365.2 619.4 1363.7 619.5M1380.3 595.8C1381.3 597.0 1384.9 600.8 1386.1 603.3C1387.3 605.8 1387.9 608.3 1387.4 610.7C1386.9 613.2 1383.8 616.7 1383.1 617.9M1389.1 588.3C1390.1 589.7 1393.8 593.3 1395.3 596.6C1396.8 599.9 1397.8 604.6 1398.1 608.2C1398.4 611.8 1397.9 615.3 1396.9 618.2C1395.9 621.1 1392.8 624.5 1391.9 625.7"/>
<path stroke="#ff00ff" stroke-width="2.20" d="M1216.6 628.9L1394.8 628.9"/>
<path stroke="#0000c4" stroke-width="1.90" d="M959.6 674.9L979.9 674.9M960.3 682.4L982.4 682.4M1047.7 672.4C1048.0 673.9 1049.5 678.9 1049.7 681.6C1049.9 684.2 1048.2 689.0 1048.9 688.5C1049.6 688.1 1052.1 681.3 1053.9 679.1C1055.7 676.8 1058.3 674.8 1059.7 674.9C1061.1 675.0 1061.7 677.7 1062.2 679.9C1062.7 682.1 1062.0 688.0 1062.7 687.9C1063.4 687.7 1064.9 681.4 1066.3 679.1C1067.8 676.8 1069.9 674.1 1071.3 674.1C1072.7 674.1 1074.1 676.6 1074.6 679.1C1075.1 681.6 1074.4 687.4 1074.3 689.0M1095.4 675.7C1094.3 675.5 1090.7 673.5 1088.8 674.1C1086.8 674.6 1084.5 677.3 1083.8 679.1C1083.1 680.9 1083.5 683.6 1084.6 684.9C1085.7 686.1 1088.6 687.1 1090.4 686.5C1092.2 686.0 1094.4 683.5 1095.4 681.6C1096.4 679.6 1096.1 673.5 1096.2 674.9C1096.4 676.3 1096.9 686.0 1096.6 689.9C1096.3 693.7 1095.9 696.5 1094.6 698.2C1093.3 699.8 1090.4 700.4 1088.8 699.8C1087.1 699.3 1085.3 695.7 1084.6 694.9M1105.4 674.1L1112.0 689.5L1121.5 674.9M1141.5 676.6L1142.5 677.9"/>
<path stroke="#0000c4" stroke-width="1.60" d="M1204.3 647.8C1203.4 648.5 1200.3 649.7 1198.6 652.0C1197.0 654.3 1194.8 658.9 1194.5 661.5C1194.2 664.0 1195.2 666.0 1196.7 667.2C1198.3 668.3 1201.4 669.4 1203.7 668.4C1206.0 667.5 1209.3 664.1 1210.6 661.5C1212.0 658.8 1212.3 654.8 1211.9 652.6C1211.5 650.4 1209.4 649.0 1208.1 648.2C1206.8 647.4 1205.0 647.9 1204.3 647.8M1216.3 666.5L1214.7 670.9M1228.1 663.4L1239.1 653.3L1236.5 669.7M1249.8 649.5L1268.5 651.1M1249.5 649.9C1249.1 651.7 1246.4 659.1 1246.6 660.8C1246.9 662.6 1249.7 659.6 1251.1 660.2C1252.4 660.8 1254.3 662.9 1254.9 664.6C1255.4 666.3 1255.1 668.9 1254.2 670.3C1253.4 671.7 1251.4 672.8 1249.8 673.1C1248.2 673.4 1245.6 672.4 1244.7 672.2M1205.6 712.3L1220.1 701.9L1218.8 717.7M1225.5 704.2L1238.4 705.1M1231.9 698.7L1232.1 710.5M1251.1 698.4C1250.1 699.4 1246.7 701.8 1245.4 704.4C1244.0 707.0 1242.7 711.7 1242.8 713.9C1243.0 716.1 1244.6 717.5 1246.0 717.7C1247.4 717.9 1249.5 717.2 1251.1 715.2C1252.6 713.2 1254.9 708.3 1255.5 705.7C1256.1 703.1 1255.3 700.6 1254.6 699.4C1253.9 698.2 1251.7 698.5 1251.1 698.4M1255.9 715.5L1256.7 716.8M1261.2 705.7L1267.2 699.4L1266.0 715.8M1274.4 705.9L1282.6 704.7M1274.4 705.9C1274.3 706.8 1272.6 710.3 1273.5 711.0C1274.5 711.7 1278.5 709.7 1280.1 710.1C1281.7 710.5 1283.3 712.3 1283.3 713.5C1283.3 714.8 1281.7 717.3 1280.1 717.7C1278.5 718.1 1274.6 716.3 1273.5 716.0M1289.0 699.4C1289.6 698.8 1291.5 696.6 1292.7 696.2C1294.0 695.8 1296.0 696.1 1296.5 696.8C1297.1 697.6 1297.0 699.3 1295.9 700.6C1294.9 702.0 1289.5 704.8 1290.2 705.1C1291.0 705.3 1298.6 702.6 1300.3 702.2M1286.2 722.1L1286.7 724.0"/>
<path stroke="#0000c4" stroke-width="2.10" d="M1165.4 680.2L1319.9 680.2"/>
<path stroke="#0000c4" stroke-width="1.70" d="M1185.1 707.2L1191.7 708.8L1198.6 718.3L1201.2 688.6L1238.4 687.8L1276.3 688.0L1289.0 688.6L1306.0 687.8"/>
</g></svg>
<div id="bot"></div>
<div class="lbl" style="left:15.400px;top:823px;line-height:12px">Page</div>
<div class="abs" style="left:40px;top:816.500px;width:70px;height:26px;background:#232323;border:1px solid #1b1b1b;border-radius:3px"></div>
<div class="lbl" style="left:45.500px;top:823px;line-height:12px">1</div>
<div class="lbl" style="left:116.800px;top:823px;line-height:12px">of 1</div>
<div class="lbl" style="left:149.600px;top:823.500px;line-height:12px">Layer</div>
<div class="lbl" style="left:176px;top:823.500px;line-height:12px;font-weight:bold;font-size:9.200px">Solution</div>
<svg class="abs" style="left:0;top:813px" width="1504" height="33" viewBox="0 813 1504 33">
<path d="M75.600 829.500h6.400M96.200 829.500h6.400M99.400 826.300v6.400" stroke="#4a4a4a" stroke-width="1" fill="none"/>
<path d="M67.500 817v25M88.600 817v25" stroke="#1e1e1e" stroke-width="1"/>
<path d="M225.300 829.200l1.800 1.800 1.800-1.800" fill="none" stroke="#e6e6e6" stroke-width="1"/>
<!-- layer nav -->
<path d="M256.500 823.200l-4.200 6 4.200 6" fill="none" stroke="#cfcfcf" stroke-width="1.100"/><circle cx="248.600" cy="829.200" r="0.700" fill="#cfcfcf"/>
<path d="M305.200 823.200l4.200 6-4.200 6" fill="none" stroke="#cfcfcf" stroke-width="1.100"/><circle cx="313.200" cy="829.200" r="0.700" fill="#cfcfcf"/>
<rect x="276" y="823.300" width="9.600" height="11.600" fill="#8f8f8f"/><path d="M277.600 827.200c1.500-1 2.500 1 4 0s1.600-0.600 2.400-0.400M277.600 831c1.500-1 2.500 1 4 0s1.600-0.600 2.400-0.400" stroke="#555" stroke-width="0.900" fill="none"/>
<!-- add page -->
<path d="M327.600 822.600h6.400l2.600 2.600v9.400h-9z" fill="#ececec"/><path d="M333.800 830.200v6.400M330.600 833.400h6.400" stroke="#2fb52f" stroke-width="1.600"/>
<path d="M351.700 828.300l3 2.700 3-2.700" fill="none" stroke="#e6e6e6" stroke-width="1.100"/>
<path d="M374.600 822.600h6.400l2.600 2.600v9.400h-9z" fill="#ececec"/><path d="M379.600 830.600l4.400 4.400M384 830.600l-4.400 4.400" stroke="#e01020" stroke-width="1.600"/>
<!-- right side -->
<rect x="1239.400" y="823.600" width="5.800" height="9.800" fill="#f0f0f0"/><rect x="1247" y="823.600" width="5.800" height="9.800" fill="#f0f0f0"/>
<rect x="1265.400" y="822.800" width="13.400" height="1.800" fill="#bdbdbd"/><rect x="1266.400" y="824.600" width="11.600" height="9.200" fill="#f6f6f6"/><rect x="1271.500" y="833.800" width="1.400" height="2.400" fill="#ddd"/>
<rect x="1311" y="816.800" width="24.500" height="25.600" rx="2.500" fill="#1b1b1b"/>
<g id="zm"><circle cx="1297.300" cy="828.700" r="4" fill="#f4f4f4"/><path d="M1300.200 831.800l2.200 2.400" stroke="#c9c9c9" stroke-width="1.200"/></g>
<use href="#zm" x="25.800"/><use href="#zm" x="51.600"/><use href="#zm" x="148.600"/>
<path d="M1295.800 827.400v2.600M1298.600 827.400v2.600" stroke="#777" stroke-width="0.900"/>
<path d="M1320.700 828.800l1.800 1.800 3.400-3.600" stroke="#2fa52f" stroke-width="1.500" fill="none"/>
<rect x="1346.300" y="828" width="5.200" height="1.500" fill="#e0607a"/>
<path d="M1443.400 828.700h5M1445.900 826.200v5" stroke="#3cb43c" stroke-width="1.300"/>
<rect x="1369" y="833.200" width="24" height="2.400" rx="1.200" fill="#a0309c"/><rect x="1393" y="833.200" width="33" height="2.400" rx="1.200" fill="#454545"/>
<path d="M1396.200 840.600l-4-4.200a5.200 5.200 0 1 1 8 0z" fill="#b5aca4" stroke="#8a827c" stroke-width="0.600"/>
<path d="M1463.500 812.500v34" stroke="#272727" stroke-width="1"/>
<g stroke="#f0601c" stroke-width="1.500" fill="none"><path d="M1478.200 826.400l-3.200-3.200M1475 826v-2.800h2.800M1483.200 826.400l3.200-3.200M1486.400 826v-2.800h-2.800M1478.200 831l-3.200 3.200M1475 831.400v2.800h2.800M1483.200 831l3.200 3.200M1486.400 831.400v2.800h-2.800"/></g>
</svg>
<div class="abs" style="left:1385px;top:815.500px;width:24px;text-align:center;font-size:9.200px;line-height:12px;color:#b8b8b8">93%</div>

</body></html>
